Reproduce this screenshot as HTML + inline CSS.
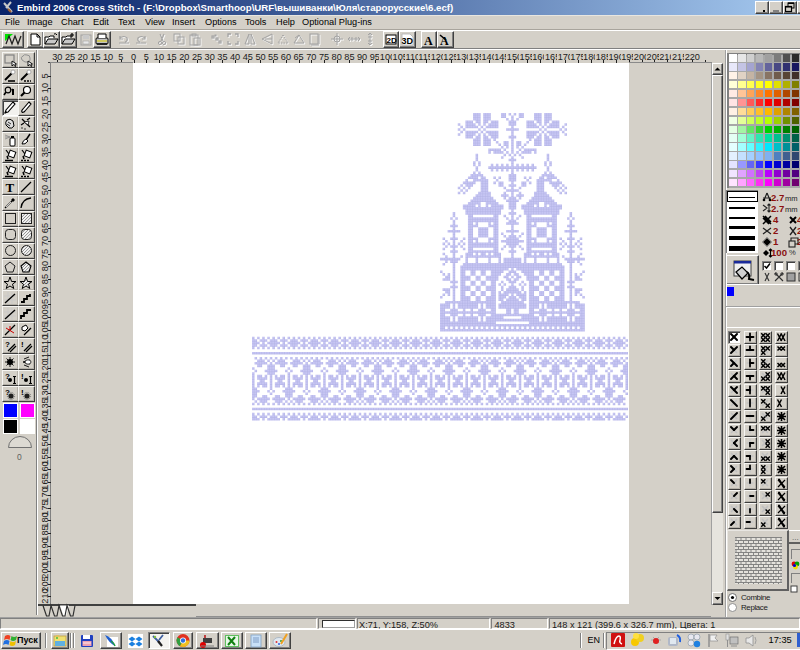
<!DOCTYPE html><html><head><meta charset="utf-8"><style>
html,body{margin:0;padding:0;}
body{width:800px;height:650px;overflow:hidden;position:relative;background:#d4d0c8;font-family:"Liberation Sans",sans-serif;}
div{box-sizing:border-box;}
.r{position:absolute;border-top:1px solid #fff;border-left:1px solid #fff;border-right:1px solid #404040;border-bottom:1px solid #404040;box-shadow:inset -1px -1px 0 #808080;background:#d4d0c8;}
.rb{position:absolute;border-top:1px solid #f6f5f2;border-left:1px solid #f6f5f2;border-right:1px solid #3c3c3c;border-bottom:1px solid #3c3c3c;box-shadow:inset -1px -1px 0 #b4b0a8;background:#d4d0c8;}
.s{position:absolute;border-top:1px solid #808080;border-left:1px solid #808080;border-right:1px solid #fff;border-bottom:1px solid #fff;}
.t{position:absolute;white-space:nowrap;line-height:1;}
svg{position:absolute;overflow:visible;}
</style></head><body>

<div style="position:absolute;left:0;top:0;width:800px;height:15px;background:linear-gradient(90deg,#0a246a 0%,#0a246a 5%,#a6caf0 100%);"></div>
<div class="t" style="left:17px;top:2.6px;font-size:9.7px;color:#fff;font-weight:bold;">Embird 2006 Cross Stitch - (F:\Dropbox\Smarthoop\URF\вышиванки\Юля\старорусские\6.ecf)</div>
<svg style="left:2px;top:1px;" width="14" height="13" viewBox="0 0 14 13"><path d="M2 2 L10 11 M9 1 L4 7" stroke="#c8c8c8" stroke-width="2"/><path d="M6 8 L9 11" stroke="#a06030" stroke-width="2"/></svg>
<div class="r" style="left:755px;top:1px;width:14px;height:13px;"></div>
<div class="r" style="left:769px;top:1px;width:14px;height:13px;"></div>
<div class="r" style="left:783px;top:1px;width:14px;height:13px;"></div>
<div class="r" style="left:797px;top:1px;width:14px;height:13px;"></div>
<svg style="left:755px;top:1px;" width="14" height="13" viewBox="0 0 14 13"><rect x="8" y="9" width="2" height="2" fill="#000"/></svg>
<svg style="left:769px;top:1px;" width="14" height="13" viewBox="0 0 14 13"><rect x="4" y="9" width="6" height="2" fill="#808080"/></svg>
<svg style="left:783px;top:1px;" width="14" height="13" viewBox="0 0 14 13"><rect x="5" y="2" width="6" height="5" fill="none" stroke="#000" stroke-width="1"/><rect x="2.5" y="5.5" width="6" height="5" fill="#d4d0c8" stroke="#000" stroke-width="1.2"/><rect x="2.5" y="5" width="6" height="1.5" fill="#000"/><rect x="5" y="1.5" width="6" height="1.5" fill="#000"/></svg>
<div class="t" style="left:5px;top:18px;font-size:9.2px;color:#000;font-weight:normal;">File</div>
<div class="t" style="left:27px;top:18px;font-size:9.2px;color:#000;font-weight:normal;">Image</div>
<div class="t" style="left:61px;top:18px;font-size:9.2px;color:#000;font-weight:normal;">Chart</div>
<div class="t" style="left:93px;top:18px;font-size:9.2px;color:#000;font-weight:normal;">Edit</div>
<div class="t" style="left:118px;top:18px;font-size:9.2px;color:#000;font-weight:normal;">Text</div>
<div class="t" style="left:145px;top:18px;font-size:9.2px;color:#000;font-weight:normal;">View</div>
<div class="t" style="left:172px;top:18px;font-size:9.2px;color:#000;font-weight:normal;">Insert</div>
<div class="t" style="left:205px;top:18px;font-size:9.2px;color:#000;font-weight:normal;">Options</div>
<div class="t" style="left:245px;top:18px;font-size:9.2px;color:#000;font-weight:normal;">Tools</div>
<div class="t" style="left:276px;top:18px;font-size:9.2px;color:#000;font-weight:normal;">Help</div>
<div class="t" style="left:302px;top:18px;font-size:9.2px;color:#000;font-weight:normal;">Optional Plug-ins</div>
<div style="position:absolute;left:0px;top:15px;width:800px;height:1px;background:#e8e6e0"></div>
<div style="position:absolute;left:0px;top:29px;width:800px;height:1px;background:#a8a49c"></div>
<div style="position:absolute;left:0px;top:30px;width:800px;height:1px;background:#fff"></div>
<div style="position:absolute;left:0px;top:48px;width:800px;height:1px;background:#808080"></div>
<div style="position:absolute;left:0px;top:49px;width:800px;height:1px;background:#fff"></div>
<div class="r" style="left:2px;top:31px;width:22px;height:17px;"></div>
<div class="r" style="left:27px;top:31px;width:17px;height:17px;"></div>
<div class="r" style="left:43px;top:31px;width:17px;height:17px;"></div>
<div class="r" style="left:60px;top:31px;width:17px;height:17px;"></div>
<div class="r" style="left:93px;top:31px;width:18px;height:17px;"></div>
<div class="r" style="left:383px;top:31px;width:16px;height:17px;"></div>
<div class="r" style="left:399px;top:31px;width:17px;height:17px;"></div>
<div class="r" style="left:421px;top:31px;width:16px;height:17px;"></div>
<div class="r" style="left:437px;top:31px;width:17px;height:17px;"></div>
<svg style="left:2px;top:31px;" width="22" height="17" viewBox="0 0 22 17"><path d="M3 3H11L3 10Z" fill="#00e000"/><path d="M4 13L7 5L10 13L13 5L16 13L19 5" fill="none" stroke="#202020" stroke-width="1.3"/></svg>
<svg style="left:27px;top:31px;" width="17" height="17" viewBox="0 0 17 17"><path d="M4 3H10L13 6V14H4Z" fill="#fff" stroke="#000" stroke-width="1"/><path d="M10 3V6H13" fill="none" stroke="#000" stroke-width="1"/></svg>
<svg style="left:43px;top:31px;" width="17" height="17" viewBox="0 0 17 17"><path d="M2 13V6H6L7 5H11V7" fill="#fff" stroke="#000" stroke-width="1"/><path d="M2 13L5 8H15L12 13Z" fill="#c8c8c8" stroke="#000" stroke-width="1"/><path d="M11 3Q13 2 14 4" stroke="#000" fill="none"/></svg>
<svg style="left:60px;top:31px;" width="17" height="17" viewBox="0 0 17 17"><path d="M2 13V6H6L7 5H11V7" fill="#fff" stroke="#000" stroke-width="1"/><path d="M2 13L5 8H15L12 13Z" fill="#c8c8c8" stroke="#000" stroke-width="1"/><path d="M12 2V6M10 4H14" stroke="#000" stroke-width="1.2"/></svg>
<svg style="left:79px;top:31px;" width="13" height="17" viewBox="0 0 13 17"><rect x="2" y="4" width="10" height="10" fill="none" stroke="#a0a0a0" stroke-width="1"/><rect x="4" y="4" width="6" height="4" fill="#c8c8c8"/><rect x="4" y="10" width="6" height="3" fill="#e8e8e8" stroke="#a0a0a0" stroke-width="0.6"/></svg>
<svg style="left:93px;top:31px;" width="18" height="17" viewBox="0 0 18 17"><rect x="3" y="7" width="12" height="6" rx="1" fill="#c0c0c0" stroke="#000" stroke-width="1"/><path d="M5 7V3H13V7" fill="#fff" stroke="#000" stroke-width="1"/><path d="M4 10H14" stroke="#e0d000" stroke-width="1"/><rect x="4" y="12" width="10" height="2" fill="#202020"/></svg>
<svg style="left:117px;top:32px;" width="14" height="14" viewBox="0 0 14 14"><g transform="translate(1,1)" stroke="#f8f8f8" fill="none"><path d="M3 6Q7 3 10 6Q11 9 8 10M2 11H12" stroke-width="1.2"/><path d="M3 4V7H6" stroke-width="1.2"/></g><g stroke="#a4a4a4" fill="none"><path d="M3 6Q7 3 10 6Q11 9 8 10M2 11H12" stroke-width="1.2"/><path d="M3 4V7H6" stroke-width="1.2"/></g></svg>
<svg style="left:134px;top:32px;" width="14" height="14" viewBox="0 0 14 14"><g transform="translate(1,1)" stroke="#f8f8f8" fill="none"><path d="M11 6Q7 3 4 6Q3 9 6 10M2 11H12" stroke-width="1.2"/><path d="M11 4V7H8" stroke-width="1.2"/></g><g stroke="#a4a4a4" fill="none"><path d="M11 6Q7 3 4 6Q3 9 6 10M2 11H12" stroke-width="1.2"/><path d="M11 4V7H8" stroke-width="1.2"/></g></svg>
<svg style="left:155px;top:32px;" width="14" height="14" viewBox="0 0 14 14"><g transform="translate(1,1)" stroke="#f8f8f8" fill="none"><path d="M5 2L8 9M9 2L6 9" stroke-width="1.1"/><circle cx="5" cy="11" r="1.6" stroke-width="1"/><circle cx="9" cy="11" r="1.6" stroke-width="1"/></g><g stroke="#a4a4a4" fill="none"><path d="M5 2L8 9M9 2L6 9" stroke-width="1.1"/><circle cx="5" cy="11" r="1.6" stroke-width="1"/><circle cx="9" cy="11" r="1.6" stroke-width="1"/></g></svg>
<svg style="left:172px;top:32px;" width="14" height="14" viewBox="0 0 14 14"><g transform="translate(1,1)" stroke="#f8f8f8" fill="none"><rect x="2" y="2" width="6" height="7" stroke-width="1"/><rect x="6" y="5" width="6" height="7" stroke-width="1"/></g><g stroke="#a4a4a4" fill="none"><rect x="2" y="2" width="6" height="7" stroke-width="1"/><rect x="6" y="5" width="6" height="7" stroke-width="1"/></g></svg>
<svg style="left:188px;top:32px;" width="14" height="14" viewBox="0 0 14 14"><g transform="translate(1,1)" stroke="#f8f8f8" fill="none"><rect x="2" y="3" width="8" height="10" stroke-width="1"/><rect x="6" y="6" width="6" height="7" stroke-width="1"/><rect x="4" y="2" width="4" height="2" stroke-width="1"/></g><g stroke="#a4a4a4" fill="none"><rect x="2" y="3" width="8" height="10" stroke-width="1"/><rect x="6" y="6" width="6" height="7" stroke-width="1"/><rect x="4" y="2" width="4" height="2" stroke-width="1"/></g></svg>
<svg style="left:209px;top:32px;" width="14" height="14" viewBox="0 0 14 14"><g transform="translate(1,1)" stroke="#f8f8f8" fill="none"><rect x="3" y="4" width="2" height="2" stroke-width="1.2"/><rect x="7" y="6" width="2" height="2" stroke-width="1.2"/><rect x="10" y="9" width="2" height="2" stroke-width="1.2"/><rect x="6" y="3" width="1" height="1"/></g><g stroke="#a4a4a4" fill="none"><rect x="3" y="4" width="2" height="2" stroke-width="1.2"/><rect x="7" y="6" width="2" height="2" stroke-width="1.2"/><rect x="10" y="9" width="2" height="2" stroke-width="1.2"/><rect x="6" y="3" width="1" height="1"/></g></svg>
<svg style="left:226px;top:32px;" width="14" height="14" viewBox="0 0 14 14"><g transform="translate(1,1)" stroke="#f8f8f8" fill="none"><path d="M2 5V2H5M9 2H12V5M12 9V12H9M5 12H2V9" stroke-width="1.3"/></g><g stroke="#a4a4a4" fill="none"><path d="M2 5V2H5M9 2H12V5M12 9V12H9M5 12H2V9" stroke-width="1.3"/></g></svg>
<svg style="left:243px;top:32px;" width="14" height="14" viewBox="0 0 14 14"><g transform="translate(1,1)" stroke="#f8f8f8" fill="none"><path d="M6 2V12H2ZM8 2V12H12Z" stroke-width="1"/></g><g stroke="#a4a4a4" fill="none"><path d="M6 2V12H2ZM8 2V12H12Z" stroke-width="1"/></g></svg>
<svg style="left:260px;top:32px;" width="14" height="14" viewBox="0 0 14 14"><g transform="translate(1,1)" stroke="#f8f8f8" fill="none"><path d="M12 2L2 7L12 12ZM12 7H5" stroke-width="1"/></g><g stroke="#a4a4a4" fill="none"><path d="M12 2L2 7L12 12ZM12 7H5" stroke-width="1"/></g></svg>
<svg style="left:276px;top:32px;" width="14" height="14" viewBox="0 0 14 14"><g transform="translate(1,1)" stroke="#f8f8f8" fill="none"><path d="M7 3L12 11H2Z" stroke-width="1" stroke-dasharray="1.5 1"/></g><g stroke="#a4a4a4" fill="none"><path d="M7 3L12 11H2Z" stroke-width="1" stroke-dasharray="1.5 1"/></g></svg>
<svg style="left:292px;top:32px;" width="14" height="14" viewBox="0 0 14 14"><g transform="translate(1,1)" stroke="#f8f8f8" fill="none"><path d="M7 3L12 11H2ZM3 6L7 3" stroke-width="1"/></g><g stroke="#a4a4a4" fill="none"><path d="M7 3L12 11H2ZM3 6L7 3" stroke-width="1"/></g></svg>
<svg style="left:308px;top:32px;" width="14" height="14" viewBox="0 0 14 14"><g transform="translate(1,1)" stroke="#f8f8f8" fill="none"><rect x="2" y="2" width="8" height="10" stroke-width="1.1"/><path d="M11 2V12M3 13H11" stroke-width="1"/></g><g stroke="#a4a4a4" fill="none"><rect x="2" y="2" width="8" height="10" stroke-width="1.1"/><path d="M11 2V12M3 13H11" stroke-width="1"/></g></svg>
<svg style="left:330px;top:32px;" width="14" height="14" viewBox="0 0 14 14"><g transform="translate(1,1)" stroke="#f8f8f8" fill="none"><path d="M7 1V13M1 7H13" stroke-width="1"/><circle cx="7" cy="7" r="3" stroke-width="1"/></g><g stroke="#a4a4a4" fill="none"><path d="M7 1V13M1 7H13" stroke-width="1"/><circle cx="7" cy="7" r="3" stroke-width="1"/></g></svg>
<svg style="left:347px;top:32px;" width="14" height="14" viewBox="0 0 14 14"><g transform="translate(1,1)" stroke="#f8f8f8" fill="none"><path d="M1 7H13M3 5L1 7L3 9M11 5L13 7L11 9M5 5V9M9 5V9" stroke-width="1"/></g><g stroke="#a4a4a4" fill="none"><path d="M1 7H13M3 5L1 7L3 9M11 5L13 7L11 9M5 5V9M9 5V9" stroke-width="1"/></g></svg>
<svg style="left:363px;top:32px;" width="14" height="14" viewBox="0 0 14 14"><g transform="translate(1,1)" stroke="#f8f8f8" fill="none"><path d="M7 1V13M5 3L7 1L9 3M5 11L7 13L9 11M5 5H9M5 9H9" stroke-width="1"/></g><g stroke="#a4a4a4" fill="none"><path d="M7 1V13M5 3L7 1L9 3M5 11L7 13L9 11M5 5H9M5 9H9" stroke-width="1"/></g></svg>
<svg style="left:383px;top:31px;" width="16" height="17" viewBox="0 0 16 17"><rect x="3" y="4" width="10" height="9" fill="#fff" stroke="#000" stroke-width="1"/><text x="3.5" y="12" font-family="Liberation Sans" font-weight="bold" font-size="8" fill="#000">2D</text></svg>
<div class="r" style="left:399px;top:31px;width:17px;height:17px;"></div>
<svg style="left:399px;top:31px;" width="17" height="17" viewBox="0 0 17 17"><path d="M3 3H11L14 6V14H3Z" fill="#fff" stroke="#b0b0b0" stroke-width="0.8"/><text x="2.5" y="13" font-family="Liberation Sans" font-weight="bold" font-size="9" fill="#000">3D</text></svg>
<svg style="left:421px;top:31px;" width="16" height="17" viewBox="0 0 16 17"><text x="3" y="13.5" font-family="Liberation Serif" font-weight="bold" font-size="12" fill="#000">A</text></svg>
<svg style="left:437px;top:31px;" width="17" height="17" viewBox="0 0 17 17"><text x="3" y="13.5" font-family="Liberation Serif" font-weight="bold" font-size="12" fill="#000">A</text><path d="M3 4L9 9" stroke="#000" stroke-width="1.6"/></svg>
<div style="position:absolute;left:0px;top:50px;width:37px;height:565px;background:#d4d0c8"></div>
<div style="position:absolute;left:36px;top:50px;width:1px;height:565px;background:#808080"></div>
<div style="position:absolute;left:37px;top:50px;width:1px;height:565px;background:#fff"></div>
<svg style="left:0;top:0" width="0" height="0"><defs><pattern id="ht" patternUnits="userSpaceOnUse" width="2.2" height="2.2" patternTransform="rotate(45)"><rect width="2.2" height="2.2" fill="#f4f4f4"/><path d="M0 0V2.2" stroke="#606060" stroke-width="1"/></pattern></defs></svg>
<div class="rb" style="left:2px;top:52px;width:17px;height:16px"></div>
<svg style="left:2px;top:52px;" width="17" height="16" viewBox="0 0 17 16"><rect x="3" y="3" width="9" height="8" fill="none" stroke="#808080" stroke-width="1.2"/><path d="M10 9L10 14L11.5 12.5L13 14.5L14 14L12.8 12L14.5 12Z" fill="#fff" stroke="#000" stroke-width="0.9"/></svg>
<div class="rb" style="left:18px;top:52px;width:17px;height:16px"></div>
<svg style="left:18px;top:52px;" width="17" height="16" viewBox="0 0 17 16"><path d="M4 8Q2 5 5 4Q6 2 9 3Q12 3 12 6Q13 9 10 10Q7 11 4 8Z" fill="none" stroke="#909090" stroke-width="1"/><path d="M10 9L10 14L11.5 12.5L13 14.5L14 14L12.8 12L14.5 12Z" fill="#fff" stroke="#000" stroke-width="0.9"/></svg>
<div class="rb" style="left:2px;top:68px;width:17px;height:16px"></div>
<svg style="left:2px;top:68px;" width="17" height="16" viewBox="0 0 17 16"><path d="M3 12L10 5" stroke="#000" stroke-width="2"/><circle cx="11" cy="4" r="2" fill="#fff" stroke="#999" stroke-width="0.8"/><path d="M6 13H13" stroke="#000" stroke-width="1.6"/></svg>
<div class="rb" style="left:18px;top:68px;width:17px;height:16px"></div>
<svg style="left:18px;top:68px;" width="17" height="16" viewBox="0 0 17 16"><path d="M3 12L10 5" stroke="#000" stroke-width="2"/><circle cx="11" cy="4" r="2" fill="#fff" stroke="#999" stroke-width="0.8"/><path d="M6 13H13" stroke="#000" stroke-width="1.6" stroke-dasharray="2 1"/></svg>
<div class="rb" style="left:2px;top:84px;width:17px;height:16px"></div>
<svg style="left:2px;top:84px;" width="17" height="16" viewBox="0 0 17 16"><circle cx="6" cy="6" r="2.8" fill="none" stroke="#000" stroke-width="1.2"/><path d="M4 8L2 11" stroke="#000" stroke-width="1.6"/><path d="M11 5V11" stroke="#000" stroke-width="2"/><path d="M9.5 6L11 5" stroke="#000" stroke-width="1.2"/></svg>
<div class="rb" style="left:18px;top:84px;width:17px;height:16px"></div>
<svg style="left:18px;top:84px;" width="17" height="16" viewBox="0 0 17 16"><circle cx="9" cy="6" r="3.5" fill="#fff" stroke="#000" stroke-width="1.2"/><path d="M6.5 8.5L3 12" stroke="#000" stroke-width="2.2"/></svg>
<div class="s" style="left:2px;top:100px;width:17px;height:16px;background:#f2f1ee;border-right-color:#fff;border-bottom-color:#fff;box-shadow:inset 1px 1px 0 #404040"></div>
<svg style="left:2px;top:100px;" width="17" height="16" viewBox="0 0 17 16"><path d="M11 2L13 4L6 12L3 13L4 10Z" fill="#fff" stroke="#000" stroke-width="1.1"/><path d="M3 13L4.5 11.5" stroke="#000" stroke-width="1.5"/></svg>
<div class="rb" style="left:18px;top:100px;width:17px;height:16px"></div>
<svg style="left:18px;top:100px;" width="17" height="16" viewBox="0 0 17 16"><path d="M11 2L13 4L7 11Q5 13 4 12Q3 11 5 9Z" fill="#fff" stroke="#000" stroke-width="1.1"/></svg>
<div class="rb" style="left:2px;top:116px;width:17px;height:16px"></div>
<svg style="left:2px;top:116px;" width="17" height="16" viewBox="0 0 17 16"><path d="M5 4Q8 2 11 5L12 10Q10 13 7 12L4 9Q3 6 5 4Z" fill="#e0e0e0" stroke="#000" stroke-width="1"/><path d="M6 6L9 8M5 8L8 10" stroke="#000" stroke-width="0.8"/></svg>
<div class="rb" style="left:18px;top:116px;width:17px;height:16px"></div>
<svg style="left:18px;top:116px;" width="17" height="16" viewBox="0 0 17 16"><path d="M4 3L12 11M9 4L12 2M3 9L6 7" stroke="#000" stroke-width="1.3"/><path d="M6 6L11 5L10 9Z" fill="#fff" stroke="#000" stroke-width="0.8"/><circle cx="4" cy="12" r="0.7" fill="#000"/><circle cx="7" cy="13" r="0.7" fill="#000"/></svg>
<div class="rb" style="left:2px;top:132px;width:17px;height:16px"></div>
<svg style="left:2px;top:132px;" width="17" height="16" viewBox="0 0 17 16"><rect x="8" y="6" width="5" height="8" rx="1" fill="#fff" stroke="#000" stroke-width="1"/><path d="M9 4H12V6H9Z" fill="#000"/><path d="M3 3L8 5M3 5L8 5M3 7L8 5" stroke="#888" stroke-width="0.8"/></svg>
<div class="rb" style="left:18px;top:132px;width:17px;height:16px"></div>
<svg style="left:18px;top:132px;" width="17" height="16" viewBox="0 0 17 16"><path d="M12 2L8 8" stroke="#000" stroke-width="1.5"/><path d="M8 7Q5 8 4 12Q7 13 10 9Z" fill="#fff" stroke="#000" stroke-width="1"/></svg>
<div class="rb" style="left:2px;top:147px;width:17px;height:16px"></div>
<svg style="left:2px;top:147px;" width="17" height="16" viewBox="0 0 17 16"><path d="M4 3L7 7" stroke="#000" stroke-width="1.2"/><rect x="7" y="4" width="6" height="6" transform="rotate(20 10 7)" fill="#fff" stroke="#000" stroke-width="1"/><path d="M5 9L6 12" stroke="#000" stroke-width="1.5"/><path d="M3 13.5H11" stroke="#000" stroke-width="1.5"/></svg>
<div class="rb" style="left:18px;top:147px;width:17px;height:16px"></div>
<svg style="left:18px;top:147px;" width="17" height="16" viewBox="0 0 17 16"><path d="M4 3L7 7" stroke="#000" stroke-width="1.2"/><rect x="7" y="4" width="6" height="6" transform="rotate(20 10 7)" fill="#fff" stroke="#000" stroke-width="1"/><path d="M5 9L6 12" stroke="#000" stroke-width="1.5"/><path d="M3 13.5H12" stroke="#000" stroke-width="1.5" stroke-dasharray="2 1"/></svg>
<div class="rb" style="left:2px;top:163px;width:17px;height:16px"></div>
<svg style="left:2px;top:163px;" width="17" height="16" viewBox="0 0 17 16"><path d="M4 3L7 7" stroke="#000" stroke-width="1.2"/><rect x="7" y="4" width="6" height="6" transform="rotate(20 10 7)" fill="#fff" stroke="#000" stroke-width="1"/><path d="M5 9L6 12" stroke="#000" stroke-width="1.5"/><path d="M3 13.5H11" stroke="#000" stroke-width="1.5"/></svg>
<div class="rb" style="left:18px;top:163px;width:17px;height:16px"></div>
<svg style="left:18px;top:163px;" width="17" height="16" viewBox="0 0 17 16"><path d="M4 3L7 7" stroke="#000" stroke-width="1.2"/><rect x="7" y="4" width="6" height="6" transform="rotate(20 10 7)" fill="#fff" stroke="#000" stroke-width="1"/><path d="M5 9L6 12" stroke="#000" stroke-width="1.5"/><path d="M3 13.5H12" stroke="#000" stroke-width="1.5" stroke-dasharray="2 1"/></svg>
<div class="rb" style="left:2px;top:179px;width:17px;height:16px"></div>
<svg style="left:2px;top:179px;" width="17" height="16" viewBox="0 0 17 16"><text x="3.5" y="13" font-family="Liberation Serif" font-weight="bold" font-size="13" fill="#000">T</text></svg>
<div class="rb" style="left:18px;top:179px;width:17px;height:16px"></div>
<svg style="left:18px;top:179px;" width="17" height="16" viewBox="0 0 17 16"><path d="M3 13L13 3" stroke="#000" stroke-width="1.3"/></svg>
<div class="rb" style="left:2px;top:195px;width:17px;height:16px"></div>
<svg style="left:2px;top:195px;" width="17" height="16" viewBox="0 0 17 16"><path d="M3 13L10 6" stroke="#000" stroke-width="1.3"/><path d="M4 12L9 7" stroke="#fff" stroke-width="0.8"/><path d="M9 5L11 3L13 5L11 7Z" fill="#000"/></svg>
<div class="rb" style="left:18px;top:195px;width:17px;height:16px"></div>
<svg style="left:18px;top:195px;" width="17" height="16" viewBox="0 0 17 16"><path d="M3 13Q4 4 13 3" fill="none" stroke="#000" stroke-width="1.3"/></svg>
<div class="rb" style="left:2px;top:211px;width:17px;height:16px"></div>
<svg style="left:2px;top:211px;" width="17" height="16" viewBox="0 0 17 16"><rect x="3.5" y="2.5" width="10" height="10" fill="none" stroke="#202020" stroke-width="1"/></svg>
<div class="rb" style="left:18px;top:211px;width:17px;height:16px"></div>
<svg style="left:18px;top:211px;" width="17" height="16" viewBox="0 0 17 16"><rect x="3.5" y="2.5" width="10" height="10" fill="url(#ht)" stroke="#202020" stroke-width="1"/></svg>
<div class="rb" style="left:2px;top:227px;width:17px;height:16px"></div>
<svg style="left:2px;top:227px;" width="17" height="16" viewBox="0 0 17 16"><rect x="3.5" y="2.5" width="10" height="10" rx="3" fill="none" stroke="#202020" stroke-width="1"/></svg>
<div class="rb" style="left:18px;top:227px;width:17px;height:16px"></div>
<svg style="left:18px;top:227px;" width="17" height="16" viewBox="0 0 17 16"><rect x="3.5" y="2.5" width="10" height="10" rx="3" fill="url(#ht)" stroke="#202020" stroke-width="1"/></svg>
<div class="rb" style="left:2px;top:243px;width:17px;height:16px"></div>
<svg style="left:2px;top:243px;" width="17" height="16" viewBox="0 0 17 16"><circle cx="8.5" cy="7.5" r="5" fill="none" stroke="#202020" stroke-width="1"/></svg>
<div class="rb" style="left:18px;top:243px;width:17px;height:16px"></div>
<svg style="left:18px;top:243px;" width="17" height="16" viewBox="0 0 17 16"><circle cx="8.5" cy="7.5" r="5" fill="url(#ht)" stroke="#202020" stroke-width="1"/></svg>
<div class="rb" style="left:2px;top:259px;width:17px;height:16px"></div>
<svg style="left:2px;top:259px;" width="17" height="16" viewBox="0 0 17 16"><path d="M8 3L13 7L11 13H5L3 7Z" fill="none" stroke="#202020" stroke-width="1"/></svg>
<div class="rb" style="left:18px;top:259px;width:17px;height:16px"></div>
<svg style="left:18px;top:259px;" width="17" height="16" viewBox="0 0 17 16"><path d="M8 3L13 7L11 13H5L3 7Z" fill="url(#ht)" stroke="#000" stroke-width="1.1"/></svg>
<div class="rb" style="left:2px;top:275px;width:17px;height:16px"></div>
<svg style="left:2px;top:275px;" width="17" height="16" viewBox="0 0 17 16"><path d="M8 2L9.6 6.5H14L10.5 9.2L11.8 13.5L8 11L4.2 13.5L5.5 9.2L2 6.5H6.4Z" fill="none" stroke="#000" stroke-width="1"/></svg>
<div class="rb" style="left:18px;top:275px;width:17px;height:16px"></div>
<svg style="left:18px;top:275px;" width="17" height="16" viewBox="0 0 17 16"><path d="M8 2L9.6 6.5H14L10.5 9.2L11.8 13.5L8 11L4.2 13.5L5.5 9.2L2 6.5H6.4Z" fill="url(#ht)" stroke="#000" stroke-width="1"/></svg>
<div class="rb" style="left:2px;top:290px;width:17px;height:16px"></div>
<svg style="left:2px;top:290px;" width="17" height="16" viewBox="0 0 17 16"><path d="M2 6H14M2 10H14M6 2V14M10 2V14" stroke="#c8c8c8" stroke-width="0.8"/><path d="M3 13L13 4" stroke="#000" stroke-width="1.3"/></svg>
<div class="rb" style="left:18px;top:290px;width:17px;height:16px"></div>
<svg style="left:18px;top:290px;" width="17" height="16" viewBox="0 0 17 16"><path d="M3 12H6V9H9V6H12V4" fill="none" stroke="#000" stroke-width="1.8"/></svg>
<div class="rb" style="left:2px;top:306px;width:17px;height:16px"></div>
<svg style="left:2px;top:306px;" width="17" height="16" viewBox="0 0 17 16"><path d="M2 6H14M2 10H14M6 2V14M10 2V14" stroke="#c8c8c8" stroke-width="0.8"/><path d="M3 13L13 4" stroke="#000" stroke-width="1.3"/></svg>
<div class="rb" style="left:18px;top:306px;width:17px;height:16px"></div>
<svg style="left:18px;top:306px;" width="17" height="16" viewBox="0 0 17 16"><path d="M3 13V10H6V7H9V4H13" fill="none" stroke="#000" stroke-width="1.8"/></svg>
<div class="rb" style="left:2px;top:322px;width:17px;height:16px"></div>
<svg style="left:2px;top:322px;" width="17" height="16" viewBox="0 0 17 16"><path d="M3 13L13 3" stroke="#000" stroke-width="1.3"/><path d="M4 6L12 11M8 4L8 9" stroke="#d00000" stroke-width="1"/></svg>
<div class="rb" style="left:18px;top:322px;width:17px;height:16px"></div>
<svg style="left:18px;top:322px;" width="17" height="16" viewBox="0 0 17 16"><path d="M6 13L13 6" stroke="#000" stroke-width="1.3"/><path d="M4 5L8 3L10 6L7 9L4 8Z" fill="#fff" stroke="#000" stroke-width="1"/></svg>
<div class="rb" style="left:2px;top:338px;width:17px;height:16px"></div>
<svg style="left:2px;top:338px;" width="17" height="16" viewBox="0 0 17 16"><text x="3" y="9" font-family="Liberation Sans" font-weight="bold" font-size="8" fill="#000">?</text><path d="M6 13L13 6M8 14L14 8" stroke="#000" stroke-width="1.3"/></svg>
<div class="rb" style="left:18px;top:338px;width:17px;height:16px"></div>
<svg style="left:18px;top:338px;" width="17" height="16" viewBox="0 0 17 16"><text x="3" y="9" font-family="Liberation Sans" font-weight="bold" font-size="8" fill="#000">!</text><path d="M6 13L13 6M8 14L14 8" stroke="#000" stroke-width="1.3"/></svg>
<div class="rb" style="left:2px;top:354px;width:17px;height:16px"></div>
<svg style="left:2px;top:354px;" width="17" height="16" viewBox="0 0 17 16"><circle cx="8" cy="8" r="3" fill="#000"/><path d="M8 3V13M3 8H13M4.5 4.5L11.5 11.5M11.5 4.5L4.5 11.5" stroke="#000" stroke-width="0.9"/></svg>
<div class="rb" style="left:18px;top:354px;width:17px;height:16px"></div>
<svg style="left:18px;top:354px;" width="17" height="16" viewBox="0 0 17 16"><path d="M5 8L12 6M5 8L12 10M6 5L11 3M6 11L11 13" stroke="#000" stroke-width="0.9"/><ellipse cx="10" cy="8" rx="3" ry="2.2" fill="#fff" stroke="#000" stroke-width="0.8"/></svg>
<div class="rb" style="left:2px;top:370px;width:17px;height:16px"></div>
<svg style="left:2px;top:370px;" width="17" height="16" viewBox="0 0 17 16"><text x="3" y="9" font-family="Liberation Sans" font-weight="bold" font-size="8" fill="#000">?</text><circle cx="8" cy="10" r="2" fill="#000"/><path d="M12.5 6V14M11 6.5H14M11 13.5H14" stroke="#000" stroke-width="1.2"/></svg>
<div class="rb" style="left:18px;top:370px;width:17px;height:16px"></div>
<svg style="left:18px;top:370px;" width="17" height="16" viewBox="0 0 17 16"><text x="3" y="9" font-family="Liberation Sans" font-weight="bold" font-size="8" fill="#000">!</text><circle cx="8" cy="10" r="2" fill="#000"/><path d="M12.5 6V14M11 6.5H14M11 13.5H14" stroke="#000" stroke-width="1.2"/></svg>
<div class="rb" style="left:2px;top:386px;width:17px;height:16px"></div>
<svg style="left:2px;top:386px;" width="17" height="16" viewBox="0 0 17 16"><text x="3" y="9" font-family="Liberation Sans" font-weight="bold" font-size="8" fill="#000">?</text><circle cx="9" cy="10" r="2.6" fill="#000" opacity="0.85"/><circle cx="9" cy="10" r="3.6" fill="none" stroke="#555" stroke-width="0.8" stroke-dasharray="1 1"/></svg>
<div class="rb" style="left:18px;top:386px;width:17px;height:16px"></div>
<svg style="left:18px;top:386px;" width="17" height="16" viewBox="0 0 17 16"><text x="3" y="9" font-family="Liberation Sans" font-weight="bold" font-size="8" fill="#000">!</text><circle cx="9" cy="10" r="2.6" fill="#000" opacity="0.85"/><circle cx="9" cy="10" r="3.6" fill="none" stroke="#555" stroke-width="0.8" stroke-dasharray="1 1"/></svg>
<div style="position:absolute;left:3px;top:403px;width:15px;height:15px;background:#fff"></div>
<div style="position:absolute;left:4px;top:404px;width:13px;height:13px;background:#0000ff"></div>
<div style="position:absolute;left:20px;top:403px;width:15px;height:15px;background:#fff"></div>
<div style="position:absolute;left:21px;top:404px;width:13px;height:13px;background:#ff00ff"></div>
<div style="position:absolute;left:3px;top:419px;width:15px;height:15px;background:#fff"></div>
<div style="position:absolute;left:4px;top:420px;width:13px;height:13px;background:#000"></div>
<div style="position:absolute;left:20px;top:419px;width:15px;height:15px;background:#fff"></div>
<div style="position:absolute;left:21px;top:420px;width:13px;height:13px;background:#fff"></div>
<svg style="left:7px;top:435px;" width="26" height="14" viewBox="0 0 26 14"><path d="M1.5 12.5A11.5 11 0 0 1 24.5 12.5Z" fill="#dcd9d2" stroke="#707070" stroke-width="1"/></svg>
<div class="t" style="left:17px;top:452.5px;font-size:8.5px;color:#606060;font-weight:normal;">0</div>
<div style="position:absolute;left:38px;top:50px;width:674px;height:555px;background:#d4d0c8"></div>
<div style="position:absolute;left:38px;top:50px;width:686px;height:13px;background:#d4d0c8"></div>
<div style="position:absolute;left:133px;top:63px;width:496px;height:541px;background:#fff"></div>
<div style="position:absolute;left:48px;top:62px;width:3px;height:1px;background:#404040"></div>
<div style="position:absolute;left:50px;top:63px;width:1px;height:541px;background:#808080"></div>
<div class="t" style="left:37.3px;top:52.5px;width:40px;text-align:center;font-size:9.2px;color:#202020;letter-spacing:0px"><span style="background:#d4d0c8;padding:0 0.5px">30</span></div>
<div class="t" style="left:50.0px;top:52.5px;width:40px;text-align:center;font-size:9.2px;color:#202020;letter-spacing:0px"><span style="background:#d4d0c8;padding:0 0.5px">25</span></div>
<div class="t" style="left:62.7px;top:52.5px;width:40px;text-align:center;font-size:9.2px;color:#202020;letter-spacing:0px"><span style="background:#d4d0c8;padding:0 0.5px">20</span></div>
<div class="t" style="left:75.4px;top:52.5px;width:40px;text-align:center;font-size:9.2px;color:#202020;letter-spacing:0px"><span style="background:#d4d0c8;padding:0 0.5px">15</span></div>
<div class="t" style="left:88.1px;top:52.5px;width:40px;text-align:center;font-size:9.2px;color:#202020;letter-spacing:0px"><span style="background:#d4d0c8;padding:0 0.5px">10</span></div>
<div class="t" style="left:100.8px;top:52.5px;width:40px;text-align:center;font-size:9.2px;color:#202020;letter-spacing:0px"><span style="background:#d4d0c8;padding:0 0.5px">5</span></div>
<div class="t" style="left:113.5px;top:52.5px;width:40px;text-align:center;font-size:9.2px;color:#202020;letter-spacing:0px"><span style="background:#d4d0c8;padding:0 0.5px">0</span></div>
<div class="t" style="left:126.2px;top:52.5px;width:40px;text-align:center;font-size:9.2px;color:#202020;letter-spacing:0px"><span style="background:#d4d0c8;padding:0 0.5px">5</span></div>
<div class="t" style="left:138.9px;top:52.5px;width:40px;text-align:center;font-size:9.2px;color:#202020;letter-spacing:0px"><span style="background:#d4d0c8;padding:0 0.5px">10</span></div>
<div class="t" style="left:151.6px;top:52.5px;width:40px;text-align:center;font-size:9.2px;color:#202020;letter-spacing:0px"><span style="background:#d4d0c8;padding:0 0.5px">15</span></div>
<div class="t" style="left:164.3px;top:52.5px;width:40px;text-align:center;font-size:9.2px;color:#202020;letter-spacing:0px"><span style="background:#d4d0c8;padding:0 0.5px">20</span></div>
<div class="t" style="left:177.0px;top:52.5px;width:40px;text-align:center;font-size:9.2px;color:#202020;letter-spacing:0px"><span style="background:#d4d0c8;padding:0 0.5px">25</span></div>
<div class="t" style="left:189.7px;top:52.5px;width:40px;text-align:center;font-size:9.2px;color:#202020;letter-spacing:0px"><span style="background:#d4d0c8;padding:0 0.5px">30</span></div>
<div class="t" style="left:202.4px;top:52.5px;width:40px;text-align:center;font-size:9.2px;color:#202020;letter-spacing:0px"><span style="background:#d4d0c8;padding:0 0.5px">35</span></div>
<div class="t" style="left:215.1px;top:52.5px;width:40px;text-align:center;font-size:9.2px;color:#202020;letter-spacing:0px"><span style="background:#d4d0c8;padding:0 0.5px">40</span></div>
<div class="t" style="left:227.8px;top:52.5px;width:40px;text-align:center;font-size:9.2px;color:#202020;letter-spacing:0px"><span style="background:#d4d0c8;padding:0 0.5px">45</span></div>
<div class="t" style="left:240.5px;top:52.5px;width:40px;text-align:center;font-size:9.2px;color:#202020;letter-spacing:0px"><span style="background:#d4d0c8;padding:0 0.5px">50</span></div>
<div class="t" style="left:253.2px;top:52.5px;width:40px;text-align:center;font-size:9.2px;color:#202020;letter-spacing:0px"><span style="background:#d4d0c8;padding:0 0.5px">55</span></div>
<div class="t" style="left:265.9px;top:52.5px;width:40px;text-align:center;font-size:9.2px;color:#202020;letter-spacing:0px"><span style="background:#d4d0c8;padding:0 0.5px">60</span></div>
<div class="t" style="left:278.6px;top:52.5px;width:40px;text-align:center;font-size:9.2px;color:#202020;letter-spacing:0px"><span style="background:#d4d0c8;padding:0 0.5px">65</span></div>
<div class="t" style="left:291.3px;top:52.5px;width:40px;text-align:center;font-size:9.2px;color:#202020;letter-spacing:0px"><span style="background:#d4d0c8;padding:0 0.5px">70</span></div>
<div class="t" style="left:304.0px;top:52.5px;width:40px;text-align:center;font-size:9.2px;color:#202020;letter-spacing:0px"><span style="background:#d4d0c8;padding:0 0.5px">75</span></div>
<div class="t" style="left:316.7px;top:52.5px;width:40px;text-align:center;font-size:9.2px;color:#202020;letter-spacing:0px"><span style="background:#d4d0c8;padding:0 0.5px">80</span></div>
<div class="t" style="left:329.4px;top:52.5px;width:40px;text-align:center;font-size:9.2px;color:#202020;letter-spacing:0px"><span style="background:#d4d0c8;padding:0 0.5px">85</span></div>
<div class="t" style="left:342.1px;top:52.5px;width:40px;text-align:center;font-size:9.2px;color:#202020;letter-spacing:0px"><span style="background:#d4d0c8;padding:0 0.5px">90</span></div>
<div class="t" style="left:354.8px;top:52.5px;width:40px;text-align:center;font-size:9.2px;color:#202020;letter-spacing:0px"><span style="background:#d4d0c8;padding:0 0.5px">95</span></div>
<div class="t" style="left:367.5px;top:52.5px;width:40px;text-align:center;font-size:9.2px;color:#202020;letter-spacing:0px"><span style="background:#d4d0c8;padding:0 0.5px">100</span></div>
<div class="t" style="left:380.2px;top:52.5px;width:40px;text-align:center;font-size:9.2px;color:#202020;letter-spacing:0px"><span style="background:#d4d0c8;padding:0 0.5px">105</span></div>
<div class="t" style="left:392.9px;top:52.5px;width:40px;text-align:center;font-size:9.2px;color:#202020;letter-spacing:0px"><span style="background:#d4d0c8;padding:0 0.5px">110</span></div>
<div class="t" style="left:405.6px;top:52.5px;width:40px;text-align:center;font-size:9.2px;color:#202020;letter-spacing:0px"><span style="background:#d4d0c8;padding:0 0.5px">115</span></div>
<div class="t" style="left:418.3px;top:52.5px;width:40px;text-align:center;font-size:9.2px;color:#202020;letter-spacing:0px"><span style="background:#d4d0c8;padding:0 0.5px">120</span></div>
<div class="t" style="left:431.0px;top:52.5px;width:40px;text-align:center;font-size:9.2px;color:#202020;letter-spacing:0px"><span style="background:#d4d0c8;padding:0 0.5px">125</span></div>
<div class="t" style="left:443.7px;top:52.5px;width:40px;text-align:center;font-size:9.2px;color:#202020;letter-spacing:0px"><span style="background:#d4d0c8;padding:0 0.5px">130</span></div>
<div class="t" style="left:456.4px;top:52.5px;width:40px;text-align:center;font-size:9.2px;color:#202020;letter-spacing:0px"><span style="background:#d4d0c8;padding:0 0.5px">135</span></div>
<div class="t" style="left:469.1px;top:52.5px;width:40px;text-align:center;font-size:9.2px;color:#202020;letter-spacing:0px"><span style="background:#d4d0c8;padding:0 0.5px">140</span></div>
<div class="t" style="left:481.8px;top:52.5px;width:40px;text-align:center;font-size:9.2px;color:#202020;letter-spacing:0px"><span style="background:#d4d0c8;padding:0 0.5px">145</span></div>
<div class="t" style="left:494.5px;top:52.5px;width:40px;text-align:center;font-size:9.2px;color:#202020;letter-spacing:0px"><span style="background:#d4d0c8;padding:0 0.5px">150</span></div>
<div class="t" style="left:507.2px;top:52.5px;width:40px;text-align:center;font-size:9.2px;color:#202020;letter-spacing:0px"><span style="background:#d4d0c8;padding:0 0.5px">155</span></div>
<div class="t" style="left:519.9px;top:52.5px;width:40px;text-align:center;font-size:9.2px;color:#202020;letter-spacing:0px"><span style="background:#d4d0c8;padding:0 0.5px">160</span></div>
<div class="t" style="left:532.6px;top:52.5px;width:40px;text-align:center;font-size:9.2px;color:#202020;letter-spacing:0px"><span style="background:#d4d0c8;padding:0 0.5px">165</span></div>
<div class="t" style="left:545.3px;top:52.5px;width:40px;text-align:center;font-size:9.2px;color:#202020;letter-spacing:0px"><span style="background:#d4d0c8;padding:0 0.5px">170</span></div>
<div class="t" style="left:558.0px;top:52.5px;width:40px;text-align:center;font-size:9.2px;color:#202020;letter-spacing:0px"><span style="background:#d4d0c8;padding:0 0.5px">175</span></div>
<div class="t" style="left:570.7px;top:52.5px;width:40px;text-align:center;font-size:9.2px;color:#202020;letter-spacing:0px"><span style="background:#d4d0c8;padding:0 0.5px">180</span></div>
<div class="t" style="left:583.4px;top:52.5px;width:40px;text-align:center;font-size:9.2px;color:#202020;letter-spacing:0px"><span style="background:#d4d0c8;padding:0 0.5px">185</span></div>
<div class="t" style="left:596.1px;top:52.5px;width:40px;text-align:center;font-size:9.2px;color:#202020;letter-spacing:0px"><span style="background:#d4d0c8;padding:0 0.5px">190</span></div>
<div class="t" style="left:608.8px;top:52.5px;width:40px;text-align:center;font-size:9.2px;color:#202020;letter-spacing:0px"><span style="background:#d4d0c8;padding:0 0.5px">195</span></div>
<div class="t" style="left:621.5px;top:52.5px;width:40px;text-align:center;font-size:9.2px;color:#202020;letter-spacing:0px"><span style="background:#d4d0c8;padding:0 0.5px">200</span></div>
<div class="t" style="left:634.2px;top:52.5px;width:40px;text-align:center;font-size:9.2px;color:#202020;letter-spacing:0px"><span style="background:#d4d0c8;padding:0 0.5px">205</span></div>
<div class="t" style="left:646.9px;top:52.5px;width:40px;text-align:center;font-size:9.2px;color:#202020;letter-spacing:0px"><span style="background:#d4d0c8;padding:0 0.5px">210</span></div>
<div class="t" style="left:659.6px;top:52.5px;width:40px;text-align:center;font-size:9.2px;color:#202020;letter-spacing:0px"><span style="background:#d4d0c8;padding:0 0.5px">215</span></div>
<div class="t" style="left:672.3px;top:52.5px;width:40px;text-align:center;font-size:9.2px;color:#202020;letter-spacing:0px"><span style="background:#d4d0c8;padding:0 0.5px">220</span></div>
<div style="position:absolute;left:57px;top:59.5px;width:1px;height:3.5px;background:#202020"></div>
<div style="position:absolute;left:70px;top:59.5px;width:1px;height:3.5px;background:#202020"></div>
<div style="position:absolute;left:83px;top:59.5px;width:1px;height:3.5px;background:#202020"></div>
<div style="position:absolute;left:95px;top:59.5px;width:1px;height:3.5px;background:#202020"></div>
<div style="position:absolute;left:108px;top:59.5px;width:1px;height:3.5px;background:#202020"></div>
<div style="position:absolute;left:121px;top:59.5px;width:1px;height:3.5px;background:#202020"></div>
<div style="position:absolute;left:134px;top:59.5px;width:1px;height:3.5px;background:#202020"></div>
<div style="position:absolute;left:146px;top:59.5px;width:1px;height:3.5px;background:#202020"></div>
<div style="position:absolute;left:159px;top:59.5px;width:1px;height:3.5px;background:#202020"></div>
<div style="position:absolute;left:172px;top:59.5px;width:1px;height:3.5px;background:#202020"></div>
<div style="position:absolute;left:184px;top:59.5px;width:1px;height:3.5px;background:#202020"></div>
<div style="position:absolute;left:197px;top:59.5px;width:1px;height:3.5px;background:#202020"></div>
<div style="position:absolute;left:210px;top:59.5px;width:1px;height:3.5px;background:#202020"></div>
<div style="position:absolute;left:222px;top:59.5px;width:1px;height:3.5px;background:#202020"></div>
<div style="position:absolute;left:235px;top:59.5px;width:1px;height:3.5px;background:#202020"></div>
<div style="position:absolute;left:248px;top:59.5px;width:1px;height:3.5px;background:#202020"></div>
<div style="position:absolute;left:260px;top:59.5px;width:1px;height:3.5px;background:#202020"></div>
<div style="position:absolute;left:273px;top:59.5px;width:1px;height:3.5px;background:#202020"></div>
<div style="position:absolute;left:286px;top:59.5px;width:1px;height:3.5px;background:#202020"></div>
<div style="position:absolute;left:299px;top:59.5px;width:1px;height:3.5px;background:#202020"></div>
<div style="position:absolute;left:311px;top:59.5px;width:1px;height:3.5px;background:#202020"></div>
<div style="position:absolute;left:324px;top:59.5px;width:1px;height:3.5px;background:#202020"></div>
<div style="position:absolute;left:337px;top:59.5px;width:1px;height:3.5px;background:#202020"></div>
<div style="position:absolute;left:349px;top:59.5px;width:1px;height:3.5px;background:#202020"></div>
<div style="position:absolute;left:362px;top:59.5px;width:1px;height:3.5px;background:#202020"></div>
<div style="position:absolute;left:375px;top:59.5px;width:1px;height:3.5px;background:#202020"></div>
<div style="position:absolute;left:388px;top:59.5px;width:1px;height:3.5px;background:#202020"></div>
<div style="position:absolute;left:400px;top:59.5px;width:1px;height:3.5px;background:#202020"></div>
<div style="position:absolute;left:413px;top:59.5px;width:1px;height:3.5px;background:#202020"></div>
<div style="position:absolute;left:426px;top:59.5px;width:1px;height:3.5px;background:#202020"></div>
<div style="position:absolute;left:438px;top:59.5px;width:1px;height:3.5px;background:#202020"></div>
<div style="position:absolute;left:451px;top:59.5px;width:1px;height:3.5px;background:#202020"></div>
<div style="position:absolute;left:464px;top:59.5px;width:1px;height:3.5px;background:#202020"></div>
<div style="position:absolute;left:476px;top:59.5px;width:1px;height:3.5px;background:#202020"></div>
<div style="position:absolute;left:489px;top:59.5px;width:1px;height:3.5px;background:#202020"></div>
<div style="position:absolute;left:502px;top:59.5px;width:1px;height:3.5px;background:#202020"></div>
<div style="position:absolute;left:514px;top:59.5px;width:1px;height:3.5px;background:#202020"></div>
<div style="position:absolute;left:527px;top:59.5px;width:1px;height:3.5px;background:#202020"></div>
<div style="position:absolute;left:540px;top:59.5px;width:1px;height:3.5px;background:#202020"></div>
<div style="position:absolute;left:553px;top:59.5px;width:1px;height:3.5px;background:#202020"></div>
<div style="position:absolute;left:565px;top:59.5px;width:1px;height:3.5px;background:#202020"></div>
<div style="position:absolute;left:578px;top:59.5px;width:1px;height:3.5px;background:#202020"></div>
<div style="position:absolute;left:591px;top:59.5px;width:1px;height:3.5px;background:#202020"></div>
<div style="position:absolute;left:603px;top:59.5px;width:1px;height:3.5px;background:#202020"></div>
<div style="position:absolute;left:616px;top:59.5px;width:1px;height:3.5px;background:#202020"></div>
<div style="position:absolute;left:629px;top:59.5px;width:1px;height:3.5px;background:#202020"></div>
<div style="position:absolute;left:642px;top:59.5px;width:1px;height:3.5px;background:#202020"></div>
<div style="position:absolute;left:654px;top:59.5px;width:1px;height:3.5px;background:#202020"></div>
<div style="position:absolute;left:667px;top:59.5px;width:1px;height:3.5px;background:#202020"></div>
<div style="position:absolute;left:680px;top:59.5px;width:1px;height:3.5px;background:#202020"></div>
<div style="position:absolute;left:692px;top:59.5px;width:1px;height:3.5px;background:#202020"></div>
<div style="position:absolute;left:705px;top:59.5px;width:1px;height:3.5px;background:#202020"></div>
<div style="position:absolute;left:48px;top:76px;width:3px;height:1px;background:#202020"></div>
<div class="t" style="left:24.5px;top:70.7px;width:40px;height:10px;text-align:center;font-size:9.2px;color:#202020;letter-spacing:0px;transform:rotate(-90deg);transform-origin:20px 5px;line-height:10px">5</div>
<div style="position:absolute;left:48px;top:88px;width:3px;height:1px;background:#202020"></div>
<div class="t" style="left:24.5px;top:83.4px;width:40px;height:10px;text-align:center;font-size:9.2px;color:#202020;letter-spacing:0px;transform:rotate(-90deg);transform-origin:20px 5px;line-height:10px">10</div>
<div style="position:absolute;left:48px;top:101px;width:3px;height:1px;background:#202020"></div>
<div class="t" style="left:24.5px;top:96.1px;width:40px;height:10px;text-align:center;font-size:9.2px;color:#202020;letter-spacing:0px;transform:rotate(-90deg);transform-origin:20px 5px;line-height:10px">15</div>
<div style="position:absolute;left:48px;top:114px;width:3px;height:1px;background:#202020"></div>
<div class="t" style="left:24.5px;top:108.8px;width:40px;height:10px;text-align:center;font-size:9.2px;color:#202020;letter-spacing:0px;transform:rotate(-90deg);transform-origin:20px 5px;line-height:10px">20</div>
<div style="position:absolute;left:48px;top:126px;width:3px;height:1px;background:#202020"></div>
<div class="t" style="left:24.5px;top:121.5px;width:40px;height:10px;text-align:center;font-size:9.2px;color:#202020;letter-spacing:0px;transform:rotate(-90deg);transform-origin:20px 5px;line-height:10px">25</div>
<div style="position:absolute;left:48px;top:139px;width:3px;height:1px;background:#202020"></div>
<div class="t" style="left:24.5px;top:134.2px;width:40px;height:10px;text-align:center;font-size:9.2px;color:#202020;letter-spacing:0px;transform:rotate(-90deg);transform-origin:20px 5px;line-height:10px">30</div>
<div style="position:absolute;left:48px;top:152px;width:3px;height:1px;background:#202020"></div>
<div class="t" style="left:24.5px;top:146.9px;width:40px;height:10px;text-align:center;font-size:9.2px;color:#202020;letter-spacing:0px;transform:rotate(-90deg);transform-origin:20px 5px;line-height:10px">35</div>
<div style="position:absolute;left:48px;top:165px;width:3px;height:1px;background:#202020"></div>
<div class="t" style="left:24.5px;top:159.6px;width:40px;height:10px;text-align:center;font-size:9.2px;color:#202020;letter-spacing:0px;transform:rotate(-90deg);transform-origin:20px 5px;line-height:10px">40</div>
<div style="position:absolute;left:48px;top:177px;width:3px;height:1px;background:#202020"></div>
<div class="t" style="left:24.5px;top:172.3px;width:40px;height:10px;text-align:center;font-size:9.2px;color:#202020;letter-spacing:0px;transform:rotate(-90deg);transform-origin:20px 5px;line-height:10px">45</div>
<div style="position:absolute;left:48px;top:190px;width:3px;height:1px;background:#202020"></div>
<div class="t" style="left:24.5px;top:185.0px;width:40px;height:10px;text-align:center;font-size:9.2px;color:#202020;letter-spacing:0px;transform:rotate(-90deg);transform-origin:20px 5px;line-height:10px">50</div>
<div style="position:absolute;left:48px;top:203px;width:3px;height:1px;background:#202020"></div>
<div class="t" style="left:24.5px;top:197.7px;width:40px;height:10px;text-align:center;font-size:9.2px;color:#202020;letter-spacing:0px;transform:rotate(-90deg);transform-origin:20px 5px;line-height:10px">55</div>
<div style="position:absolute;left:48px;top:215px;width:3px;height:1px;background:#202020"></div>
<div class="t" style="left:24.5px;top:210.4px;width:40px;height:10px;text-align:center;font-size:9.2px;color:#202020;letter-spacing:0px;transform:rotate(-90deg);transform-origin:20px 5px;line-height:10px">60</div>
<div style="position:absolute;left:48px;top:228px;width:3px;height:1px;background:#202020"></div>
<div class="t" style="left:24.5px;top:223.1px;width:40px;height:10px;text-align:center;font-size:9.2px;color:#202020;letter-spacing:0px;transform:rotate(-90deg);transform-origin:20px 5px;line-height:10px">65</div>
<div style="position:absolute;left:48px;top:241px;width:3px;height:1px;background:#202020"></div>
<div class="t" style="left:24.5px;top:235.8px;width:40px;height:10px;text-align:center;font-size:9.2px;color:#202020;letter-spacing:0px;transform:rotate(-90deg);transform-origin:20px 5px;line-height:10px">70</div>
<div style="position:absolute;left:48px;top:254px;width:3px;height:1px;background:#202020"></div>
<div class="t" style="left:24.5px;top:248.5px;width:40px;height:10px;text-align:center;font-size:9.2px;color:#202020;letter-spacing:0px;transform:rotate(-90deg);transform-origin:20px 5px;line-height:10px">75</div>
<div style="position:absolute;left:48px;top:266px;width:3px;height:1px;background:#202020"></div>
<div class="t" style="left:24.5px;top:261.2px;width:40px;height:10px;text-align:center;font-size:9.2px;color:#202020;letter-spacing:0px;transform:rotate(-90deg);transform-origin:20px 5px;line-height:10px">80</div>
<div style="position:absolute;left:48px;top:279px;width:3px;height:1px;background:#202020"></div>
<div class="t" style="left:24.5px;top:273.9px;width:40px;height:10px;text-align:center;font-size:9.2px;color:#202020;letter-spacing:0px;transform:rotate(-90deg);transform-origin:20px 5px;line-height:10px">85</div>
<div style="position:absolute;left:48px;top:292px;width:3px;height:1px;background:#202020"></div>
<div class="t" style="left:24.5px;top:286.6px;width:40px;height:10px;text-align:center;font-size:9.2px;color:#202020;letter-spacing:0px;transform:rotate(-90deg);transform-origin:20px 5px;line-height:10px">90</div>
<div style="position:absolute;left:48px;top:304px;width:3px;height:1px;background:#202020"></div>
<div class="t" style="left:24.5px;top:299.3px;width:40px;height:10px;text-align:center;font-size:9.2px;color:#202020;letter-spacing:0px;transform:rotate(-90deg);transform-origin:20px 5px;line-height:10px">95</div>
<div style="position:absolute;left:48px;top:317px;width:3px;height:1px;background:#202020"></div>
<div class="t" style="left:24.5px;top:312.0px;width:40px;height:10px;text-align:center;font-size:9.2px;color:#202020;letter-spacing:0px;transform:rotate(-90deg);transform-origin:20px 5px;line-height:10px">100</div>
<div style="position:absolute;left:48px;top:330px;width:3px;height:1px;background:#202020"></div>
<div class="t" style="left:24.5px;top:324.7px;width:40px;height:10px;text-align:center;font-size:9.2px;color:#202020;letter-spacing:0px;transform:rotate(-90deg);transform-origin:20px 5px;line-height:10px">105</div>
<div style="position:absolute;left:48px;top:342px;width:3px;height:1px;background:#202020"></div>
<div class="t" style="left:24.5px;top:337.4px;width:40px;height:10px;text-align:center;font-size:9.2px;color:#202020;letter-spacing:0px;transform:rotate(-90deg);transform-origin:20px 5px;line-height:10px">110</div>
<div style="position:absolute;left:48px;top:355px;width:3px;height:1px;background:#202020"></div>
<div class="t" style="left:24.5px;top:350.1px;width:40px;height:10px;text-align:center;font-size:9.2px;color:#202020;letter-spacing:0px;transform:rotate(-90deg);transform-origin:20px 5px;line-height:10px">115</div>
<div style="position:absolute;left:48px;top:368px;width:3px;height:1px;background:#202020"></div>
<div class="t" style="left:24.5px;top:362.8px;width:40px;height:10px;text-align:center;font-size:9.2px;color:#202020;letter-spacing:0px;transform:rotate(-90deg);transform-origin:20px 5px;line-height:10px">120</div>
<div style="position:absolute;left:48px;top:380px;width:3px;height:1px;background:#202020"></div>
<div class="t" style="left:24.5px;top:375.5px;width:40px;height:10px;text-align:center;font-size:9.2px;color:#202020;letter-spacing:0px;transform:rotate(-90deg);transform-origin:20px 5px;line-height:10px">125</div>
<div style="position:absolute;left:48px;top:393px;width:3px;height:1px;background:#202020"></div>
<div class="t" style="left:24.5px;top:388.2px;width:40px;height:10px;text-align:center;font-size:9.2px;color:#202020;letter-spacing:0px;transform:rotate(-90deg);transform-origin:20px 5px;line-height:10px">130</div>
<div style="position:absolute;left:48px;top:406px;width:3px;height:1px;background:#202020"></div>
<div class="t" style="left:24.5px;top:400.9px;width:40px;height:10px;text-align:center;font-size:9.2px;color:#202020;letter-spacing:0px;transform:rotate(-90deg);transform-origin:20px 5px;line-height:10px">135</div>
<div style="position:absolute;left:48px;top:419px;width:3px;height:1px;background:#202020"></div>
<div class="t" style="left:24.5px;top:413.6px;width:40px;height:10px;text-align:center;font-size:9.2px;color:#202020;letter-spacing:0px;transform:rotate(-90deg);transform-origin:20px 5px;line-height:10px">140</div>
<div style="position:absolute;left:48px;top:431px;width:3px;height:1px;background:#202020"></div>
<div class="t" style="left:24.5px;top:426.3px;width:40px;height:10px;text-align:center;font-size:9.2px;color:#202020;letter-spacing:0px;transform:rotate(-90deg);transform-origin:20px 5px;line-height:10px">145</div>
<div style="position:absolute;left:48px;top:444px;width:3px;height:1px;background:#202020"></div>
<div class="t" style="left:24.5px;top:439.0px;width:40px;height:10px;text-align:center;font-size:9.2px;color:#202020;letter-spacing:0px;transform:rotate(-90deg);transform-origin:20px 5px;line-height:10px">150</div>
<div style="position:absolute;left:48px;top:457px;width:3px;height:1px;background:#202020"></div>
<div class="t" style="left:24.5px;top:451.7px;width:40px;height:10px;text-align:center;font-size:9.2px;color:#202020;letter-spacing:0px;transform:rotate(-90deg);transform-origin:20px 5px;line-height:10px">155</div>
<div style="position:absolute;left:48px;top:469px;width:3px;height:1px;background:#202020"></div>
<div class="t" style="left:24.5px;top:464.4px;width:40px;height:10px;text-align:center;font-size:9.2px;color:#202020;letter-spacing:0px;transform:rotate(-90deg);transform-origin:20px 5px;line-height:10px">160</div>
<div style="position:absolute;left:48px;top:482px;width:3px;height:1px;background:#202020"></div>
<div class="t" style="left:24.5px;top:477.1px;width:40px;height:10px;text-align:center;font-size:9.2px;color:#202020;letter-spacing:0px;transform:rotate(-90deg);transform-origin:20px 5px;line-height:10px">165</div>
<div style="position:absolute;left:48px;top:495px;width:3px;height:1px;background:#202020"></div>
<div class="t" style="left:24.5px;top:489.8px;width:40px;height:10px;text-align:center;font-size:9.2px;color:#202020;letter-spacing:0px;transform:rotate(-90deg);transform-origin:20px 5px;line-height:10px">170</div>
<div style="position:absolute;left:48px;top:508px;width:3px;height:1px;background:#202020"></div>
<div class="t" style="left:24.5px;top:502.5px;width:40px;height:10px;text-align:center;font-size:9.2px;color:#202020;letter-spacing:0px;transform:rotate(-90deg);transform-origin:20px 5px;line-height:10px">175</div>
<div style="position:absolute;left:48px;top:520px;width:3px;height:1px;background:#202020"></div>
<div class="t" style="left:24.5px;top:515.2px;width:40px;height:10px;text-align:center;font-size:9.2px;color:#202020;letter-spacing:0px;transform:rotate(-90deg);transform-origin:20px 5px;line-height:10px">180</div>
<div style="position:absolute;left:48px;top:533px;width:3px;height:1px;background:#202020"></div>
<div class="t" style="left:24.5px;top:527.9px;width:40px;height:10px;text-align:center;font-size:9.2px;color:#202020;letter-spacing:0px;transform:rotate(-90deg);transform-origin:20px 5px;line-height:10px">185</div>
<div style="position:absolute;left:48px;top:546px;width:3px;height:1px;background:#202020"></div>
<div class="t" style="left:24.5px;top:540.6px;width:40px;height:10px;text-align:center;font-size:9.2px;color:#202020;letter-spacing:0px;transform:rotate(-90deg);transform-origin:20px 5px;line-height:10px">190</div>
<div style="position:absolute;left:48px;top:558px;width:3px;height:1px;background:#202020"></div>
<div class="t" style="left:24.5px;top:553.3px;width:40px;height:10px;text-align:center;font-size:9.2px;color:#202020;letter-spacing:0px;transform:rotate(-90deg);transform-origin:20px 5px;line-height:10px">195</div>
<div style="position:absolute;left:48px;top:571px;width:3px;height:1px;background:#202020"></div>
<div class="t" style="left:24.5px;top:566.0px;width:40px;height:10px;text-align:center;font-size:9.2px;color:#202020;letter-spacing:0px;transform:rotate(-90deg);transform-origin:20px 5px;line-height:10px">200</div>
<div style="position:absolute;left:48px;top:584px;width:3px;height:1px;background:#202020"></div>
<div class="t" style="left:24.5px;top:578.7px;width:40px;height:10px;text-align:center;font-size:9.2px;color:#202020;letter-spacing:0px;transform:rotate(-90deg);transform-origin:20px 5px;line-height:10px">205</div>
<div style="position:absolute;left:48px;top:596px;width:3px;height:1px;background:#202020"></div>
<div class="t" style="left:24.5px;top:591.4px;width:40px;height:10px;text-align:center;font-size:9.2px;color:#202020;letter-spacing:0px;transform:rotate(-90deg);transform-origin:20px 5px;line-height:10px">210</div>
<div style="position:absolute;left:50px;top:62px;width:83px;height:1px;background:#8a8a8a"></div>
<div style="position:absolute;left:629px;top:62px;width:83px;height:1px;background:#8a8a8a"></div>
<svg style="left:252.25px;top:113px" width="376" height="308" viewBox="0 0 148 121.2" preserveAspectRatio="none"><defs><pattern id="g" patternUnits="userSpaceOnUse" width="1" height="1"><rect width="1" height="1" fill="#c6c5f3"/><path d="M0 0.9H1M0.9 0V1" stroke="#b0afe0" stroke-width="0.2"/></pattern></defs><path d="M87 0h3v1h-3zM91 0h3v1h-3zM98 0h2v1h-2zM101 0h1v1h-1zM103 0h1v1h-1zM105 0h2v1h-2zM111 0h3v1h-3zM115 0h3v1h-3zM87 1h3v1h-3zM91 1h3v1h-3zM98 1h2v1h-2zM102 1h1v1h-1zM105 1h2v1h-2zM111 1h3v1h-3zM115 1h3v1h-3zM87 2h3v1h-3zM91 2h3v1h-3zM100 2h1v1h-1zM102 2h1v1h-1zM104 2h1v1h-1zM111 2h3v1h-3zM115 2h3v1h-3zM84 3h3v1h-3zM88 3h2v1h-2zM91 3h2v1h-2zM94 3h3v1h-3zM101 3h3v1h-3zM108 3h3v1h-3zM112 3h2v1h-2zM115 3h2v1h-2zM118 3h3v1h-3zM81 4h1v1h-1zM84 4h4v1h-4zM89 4h1v1h-1zM91 4h1v1h-1zM93 4h4v1h-4zM101 4h3v1h-3zM108 4h4v1h-4zM113 4h1v1h-1zM115 4h1v1h-1zM117 4h4v1h-4zM123 4h1v1h-1zM82 5h1v1h-1zM84 5h5v1h-5zM90 5h1v1h-1zM92 5h5v1h-5zM102 5h1v1h-1zM108 5h5v1h-5zM114 5h1v1h-1zM116 5h5v1h-5zM122 5h1v1h-1zM81 6h1v1h-1zM83 6h1v1h-1zM89 6h1v1h-1zM91 6h1v1h-1zM100 6h5v1h-5zM113 6h1v1h-1zM115 6h1v1h-1zM121 6h1v1h-1zM123 6h1v1h-1zM82 7h1v1h-1zM84 7h5v1h-5zM90 7h1v1h-1zM92 7h5v1h-5zM102 7h1v1h-1zM108 7h5v1h-5zM114 7h1v1h-1zM116 7h5v1h-5zM122 7h1v1h-1zM81 8h1v1h-1zM84 8h4v1h-4zM89 8h1v1h-1zM91 8h1v1h-1zM93 8h4v1h-4zM102 8h1v1h-1zM108 8h4v1h-4zM113 8h1v1h-1zM115 8h1v1h-1zM117 8h4v1h-4zM123 8h1v1h-1zM84 9h3v1h-3zM88 9h2v1h-2zM91 9h2v1h-2zM94 9h3v1h-3zM101 9h3v1h-3zM108 9h3v1h-3zM112 9h2v1h-2zM115 9h2v1h-2zM118 9h3v1h-3zM87 10h3v1h-3zM91 10h3v1h-3zM95 10h1v1h-1zM102 10h1v1h-1zM109 10h1v1h-1zM111 10h3v1h-3zM115 10h3v1h-3zM87 11h3v1h-3zM91 11h3v1h-3zM96 11h1v1h-1zM99 11h2v1h-2zM102 11h1v1h-1zM104 11h2v1h-2zM108 11h1v1h-1zM111 11h3v1h-3zM115 11h3v1h-3zM87 12h3v1h-3zM91 12h3v1h-3zM97 12h1v1h-1zM99 12h2v1h-2zM102 12h1v1h-1zM104 12h2v1h-2zM107 12h1v1h-1zM111 12h3v1h-3zM115 12h3v1h-3zM98 13h1v1h-1zM100 13h1v1h-1zM102 13h1v1h-1zM104 13h1v1h-1zM106 13h1v1h-1zM93 14h5v1h-5zM99 14h1v1h-1zM102 14h1v1h-1zM105 14h1v1h-1zM107 14h5v1h-5zM93 15h1v1h-1zM95 15h4v1h-4zM100 15h1v1h-1zM102 15h1v1h-1zM104 15h1v1h-1zM106 15h4v1h-4zM111 15h1v1h-1zM88 16h1v1h-1zM99 16h1v1h-1zM101 16h1v1h-1zM103 16h1v1h-1zM105 16h1v1h-1zM116 16h1v1h-1zM88 17h1v1h-1zM98 17h1v1h-1zM102 17h1v1h-1zM106 17h1v1h-1zM116 17h1v1h-1zM88 18h1v1h-1zM101 18h3v1h-3zM116 18h1v1h-1zM87 19h1v1h-1zM89 19h1v1h-1zM102 19h1v1h-1zM115 19h1v1h-1zM117 19h1v1h-1zM87 20h1v1h-1zM89 20h1v1h-1zM94 20h1v1h-1zM96 20h1v1h-1zM98 20h1v1h-1zM100 20h1v1h-1zM102 20h1v1h-1zM104 20h1v1h-1zM106 20h1v1h-1zM108 20h1v1h-1zM110 20h1v1h-1zM115 20h1v1h-1zM117 20h1v1h-1zM88 21h1v1h-1zM93 21h19v1h-19zM116 21h1v1h-1zM88 22h1v1h-1zM94 22h1v1h-1zM96 22h1v1h-1zM98 22h1v1h-1zM100 22h1v1h-1zM102 22h1v1h-1zM104 22h1v1h-1zM106 22h1v1h-1zM108 22h1v1h-1zM110 22h1v1h-1zM116 22h1v1h-1zM87 23h1v1h-1zM89 23h1v1h-1zM102 23h1v1h-1zM115 23h1v1h-1zM117 23h1v1h-1zM86 24h5v1h-5zM101 24h3v1h-3zM114 24h5v1h-5zM85 25h4v1h-4zM90 25h2v1h-2zM95 25h1v1h-1zM97 25h1v1h-1zM101 25h3v1h-3zM107 25h1v1h-1zM109 25h1v1h-1zM113 25h2v1h-2zM116 25h4v1h-4zM84 26h1v1h-1zM87 26h6v1h-6zM96 26h1v1h-1zM101 26h3v1h-3zM108 26h1v1h-1zM112 26h6v1h-6zM120 26h1v1h-1zM83 27h5v1h-5zM90 27h3v1h-3zM95 27h1v1h-1zM97 27h2v1h-2zM102 27h1v1h-1zM106 27h2v1h-2zM109 27h1v1h-1zM112 27h3v1h-3zM117 27h5v1h-5zM82 28h1v1h-1zM84 28h3v1h-3zM90 28h3v1h-3zM97 28h2v1h-2zM101 28h3v1h-3zM106 28h2v1h-2zM112 28h3v1h-3zM118 28h3v1h-3zM122 28h1v1h-1zM81 29h1v1h-1zM83 29h1v1h-1zM85 29h1v1h-1zM90 29h3v1h-3zM99 29h1v1h-1zM102 29h1v1h-1zM105 29h1v1h-1zM112 29h3v1h-3zM119 29h1v1h-1zM121 29h1v1h-1zM123 29h1v1h-1zM82 30h1v1h-1zM84 30h1v1h-1zM90 30h3v1h-3zM100 30h5v1h-5zM112 30h3v1h-3zM120 30h1v1h-1zM122 30h1v1h-1zM81 31h1v1h-1zM83 31h1v1h-1zM89 31h5v1h-5zM99 31h1v1h-1zM102 31h1v1h-1zM105 31h1v1h-1zM111 31h5v1h-5zM121 31h1v1h-1zM123 31h1v1h-1zM88 32h6v1h-6zM98 32h3v1h-3zM102 32h1v1h-1zM104 32h3v1h-3zM111 32h6v1h-6zM87 33h8v1h-8zM99 33h1v1h-1zM101 33h3v1h-3zM105 33h1v1h-1zM110 33h8v1h-8zM86 34h10v1h-10zM100 34h5v1h-5zM109 34h10v1h-10zM85 35h5v1h-5zM92 35h5v1h-5zM101 35h3v1h-3zM108 35h5v1h-5zM115 35h5v1h-5zM83 36h5v1h-5zM89 36h1v1h-1zM92 36h1v1h-1zM94 36h5v1h-5zM101 36h3v1h-3zM106 36h5v1h-5zM112 36h1v1h-1zM115 36h1v1h-1zM117 36h5v1h-5zM83 37h16v1h-16zM101 37h3v1h-3zM106 37h16v1h-16zM84 38h14v1h-14zM102 38h1v1h-1zM107 38h14v1h-14zM79 39h1v1h-1zM84 39h14v1h-14zM101 39h3v1h-3zM107 39h14v1h-14zM125 39h1v1h-1zM79 40h1v1h-1zM85 40h2v1h-2zM95 40h2v1h-2zM99 40h1v1h-1zM102 40h1v1h-1zM105 40h1v1h-1zM108 40h2v1h-2zM118 40h2v1h-2zM125 40h1v1h-1zM78 41h1v1h-1zM80 41h1v1h-1zM85 41h12v1h-12zM100 41h1v1h-1zM102 41h1v1h-1zM104 41h1v1h-1zM108 41h12v1h-12zM124 41h1v1h-1zM126 41h1v1h-1zM79 42h1v1h-1zM85 42h12v1h-12zM101 42h3v1h-3zM108 42h12v1h-12zM125 42h1v1h-1zM79 43h1v1h-1zM85 43h2v1h-2zM88 43h1v1h-1zM93 43h1v1h-1zM95 43h2v1h-2zM100 43h5v1h-5zM108 43h2v1h-2zM111 43h1v1h-1zM116 43h1v1h-1zM118 43h2v1h-2zM125 43h1v1h-1zM78 44h3v1h-3zM85 44h4v1h-4zM93 44h4v1h-4zM102 44h1v1h-1zM108 44h4v1h-4zM116 44h4v1h-4zM124 44h3v1h-3zM79 45h1v1h-1zM85 45h2v1h-2zM89 45h4v1h-4zM95 45h2v1h-2zM102 45h1v1h-1zM108 45h2v1h-2zM112 45h4v1h-4zM118 45h2v1h-2zM125 45h1v1h-1zM77 46h5v1h-5zM85 46h2v1h-2zM89 46h4v1h-4zM95 46h2v1h-2zM100 46h5v1h-5zM108 46h2v1h-2zM112 46h4v1h-4zM118 46h2v1h-2zM123 46h5v1h-5zM79 47h1v1h-1zM85 47h2v1h-2zM89 47h4v1h-4zM95 47h2v1h-2zM98 47h1v1h-1zM102 47h1v1h-1zM106 47h1v1h-1zM108 47h2v1h-2zM112 47h4v1h-4zM118 47h2v1h-2zM125 47h1v1h-1zM79 48h1v1h-1zM85 48h2v1h-2zM89 48h4v1h-4zM95 48h2v1h-2zM99 48h1v1h-1zM101 48h3v1h-3zM105 48h1v1h-1zM108 48h2v1h-2zM112 48h4v1h-4zM118 48h2v1h-2zM125 48h1v1h-1zM75 49h1v1h-1zM78 49h3v1h-3zM83 49h1v1h-1zM85 49h4v1h-4zM93 49h4v1h-4zM100 49h5v1h-5zM108 49h4v1h-4zM116 49h4v1h-4zM121 49h1v1h-1zM124 49h3v1h-3zM129 49h1v1h-1zM76 50h1v1h-1zM79 50h1v1h-1zM82 50h1v1h-1zM85 50h2v1h-2zM88 50h1v1h-1zM93 50h1v1h-1zM95 50h2v1h-2zM98 50h9v1h-9zM108 50h2v1h-2zM111 50h1v1h-1zM116 50h1v1h-1zM118 50h2v1h-2zM122 50h1v1h-1zM125 50h1v1h-1zM128 50h1v1h-1zM75 51h1v1h-1zM77 51h1v1h-1zM79 51h1v1h-1zM81 51h1v1h-1zM83 51h1v1h-1zM85 51h12v1h-12zM100 51h5v1h-5zM108 51h12v1h-12zM121 51h1v1h-1zM123 51h1v1h-1zM125 51h1v1h-1zM127 51h1v1h-1zM129 51h1v1h-1zM76 52h1v1h-1zM78 52h3v1h-3zM82 52h1v1h-1zM85 52h12v1h-12zM99 52h1v1h-1zM101 52h3v1h-3zM105 52h1v1h-1zM108 52h12v1h-12zM122 52h1v1h-1zM124 52h3v1h-3zM128 52h1v1h-1zM75 53h1v1h-1zM79 53h1v1h-1zM83 53h1v1h-1zM85 53h2v1h-2zM95 53h2v1h-2zM98 53h1v1h-1zM102 53h1v1h-1zM106 53h1v1h-1zM108 53h2v1h-2zM118 53h2v1h-2zM121 53h1v1h-1zM125 53h1v1h-1zM129 53h1v1h-1zM78 54h3v1h-3zM85 54h12v1h-12zM101 54h3v1h-3zM108 54h12v1h-12zM124 54h3v1h-3zM75 55h1v1h-1zM79 55h1v1h-1zM84 55h3v1h-3zM88 55h1v1h-1zM90 55h2v1h-2zM93 55h1v1h-1zM95 55h3v1h-3zM102 55h1v1h-1zM107 55h3v1h-3zM111 55h1v1h-1zM113 55h2v1h-2zM116 55h1v1h-1zM118 55h3v1h-3zM125 55h1v1h-1zM129 55h1v1h-1zM76 56h1v1h-1zM79 56h1v1h-1zM82 56h1v1h-1zM84 56h14v1h-14zM102 56h1v1h-1zM107 56h14v1h-14zM122 56h1v1h-1zM125 56h1v1h-1zM128 56h1v1h-1zM74 57h8v1h-8zM84 57h1v1h-1zM88 57h1v1h-1zM93 57h1v1h-1zM97 57h1v1h-1zM99 57h7v1h-7zM107 57h1v1h-1zM111 57h1v1h-1zM116 57h1v1h-1zM120 57h1v1h-1zM123 57h8v1h-8zM76 58h1v1h-1zM78 58h3v1h-3zM84 58h1v1h-1zM88 58h1v1h-1zM93 58h1v1h-1zM97 58h1v1h-1zM99 58h7v1h-7zM107 58h1v1h-1zM111 58h1v1h-1zM116 58h1v1h-1zM120 58h1v1h-1zM124 58h3v1h-3zM128 58h1v1h-1zM75 59h1v1h-1zM79 59h1v1h-1zM83 59h39v1h-39zM125 59h1v1h-1zM129 59h1v1h-1zM79 60h1v1h-1zM82 60h41v1h-41zM125 60h1v1h-1zM79 61h1v1h-1zM82 61h19v1h-19zM102 61h1v1h-1zM104 61h19v1h-19zM125 61h1v1h-1zM74 62h1v1h-1zM79 62h1v1h-1zM82 62h2v1h-2zM86 62h2v1h-2zM90 62h2v1h-2zM94 62h5v1h-5zM101 62h3v1h-3zM106 62h5v1h-5zM113 62h2v1h-2zM117 62h2v1h-2zM121 62h2v1h-2zM125 62h1v1h-1zM130 62h1v1h-1zM75 63h1v1h-1zM77 63h1v1h-1zM79 63h1v1h-1zM82 63h2v1h-2zM86 63h2v1h-2zM90 63h2v1h-2zM94 63h4v1h-4zM100 63h2v1h-2zM103 63h2v1h-2zM107 63h4v1h-4zM113 63h2v1h-2zM117 63h2v1h-2zM121 63h2v1h-2zM125 63h1v1h-1zM127 63h1v1h-1zM129 63h1v1h-1zM76 64h2v1h-2zM79 64h1v1h-1zM82 64h4v1h-4zM88 64h2v1h-2zM92 64h5v1h-5zM99 64h2v1h-2zM102 64h1v1h-1zM104 64h2v1h-2zM108 64h5v1h-5zM115 64h2v1h-2zM119 64h4v1h-4zM125 64h1v1h-1zM127 64h2v1h-2zM75 65h3v1h-3zM79 65h1v1h-1zM82 65h4v1h-4zM88 65h2v1h-2zM92 65h5v1h-5zM100 65h2v1h-2zM103 65h2v1h-2zM108 65h5v1h-5zM115 65h2v1h-2zM119 65h4v1h-4zM125 65h1v1h-1zM127 65h3v1h-3zM78 66h3v1h-3zM82 66h2v1h-2zM86 66h2v1h-2zM90 66h2v1h-2zM94 66h2v1h-2zM98 66h1v1h-1zM101 66h3v1h-3zM106 66h1v1h-1zM109 66h2v1h-2zM113 66h2v1h-2zM117 66h2v1h-2zM121 66h2v1h-2zM124 66h3v1h-3zM79 67h1v1h-1zM82 67h2v1h-2zM86 67h2v1h-2zM90 67h2v1h-2zM94 67h2v1h-2zM97 67h1v1h-1zM99 67h1v1h-1zM102 67h1v1h-1zM105 67h1v1h-1zM107 67h1v1h-1zM109 67h2v1h-2zM113 67h2v1h-2zM117 67h2v1h-2zM121 67h2v1h-2zM125 67h1v1h-1zM78 68h3v1h-3zM82 68h4v1h-4zM88 68h2v1h-2zM92 68h4v1h-4zM98 68h1v1h-1zM101 68h3v1h-3zM106 68h1v1h-1zM109 68h4v1h-4zM115 68h2v1h-2zM119 68h4v1h-4zM124 68h3v1h-3zM75 69h3v1h-3zM79 69h1v1h-1zM82 69h4v1h-4zM88 69h2v1h-2zM92 69h4v1h-4zM98 69h1v1h-1zM100 69h5v1h-5zM106 69h1v1h-1zM109 69h4v1h-4zM115 69h2v1h-2zM119 69h4v1h-4zM125 69h1v1h-1zM127 69h3v1h-3zM76 70h2v1h-2zM79 70h1v1h-1zM82 70h2v1h-2zM86 70h2v1h-2zM90 70h2v1h-2zM94 70h2v1h-2zM97 70h1v1h-1zM99 70h7v1h-7zM107 70h1v1h-1zM109 70h2v1h-2zM113 70h2v1h-2zM117 70h2v1h-2zM121 70h2v1h-2zM125 70h1v1h-1zM127 70h2v1h-2zM75 71h1v1h-1zM77 71h1v1h-1zM79 71h1v1h-1zM82 71h2v1h-2zM86 71h2v1h-2zM90 71h2v1h-2zM94 71h2v1h-2zM97 71h4v1h-4zM102 71h1v1h-1zM104 71h4v1h-4zM109 71h2v1h-2zM113 71h2v1h-2zM117 71h2v1h-2zM121 71h2v1h-2zM125 71h1v1h-1zM127 71h1v1h-1zM129 71h1v1h-1zM74 72h1v1h-1zM79 72h1v1h-1zM82 72h4v1h-4zM88 72h2v1h-2zM92 72h4v1h-4zM97 72h3v1h-3zM101 72h3v1h-3zM105 72h3v1h-3zM109 72h4v1h-4zM115 72h2v1h-2zM119 72h4v1h-4zM125 72h1v1h-1zM130 72h1v1h-1zM79 73h1v1h-1zM82 73h4v1h-4zM88 73h2v1h-2zM92 73h4v1h-4zM97 73h2v1h-2zM100 73h5v1h-5zM106 73h2v1h-2zM109 73h4v1h-4zM115 73h2v1h-2zM119 73h4v1h-4zM125 73h1v1h-1zM76 74h20v1h-20zM98 74h9v1h-9zM109 74h20v1h-20zM74 75h4v1h-4zM79 75h1v1h-1zM81 75h8v1h-8zM90 75h1v1h-1zM92 75h4v1h-4zM97 75h11v1h-11zM109 75h4v1h-4zM114 75h1v1h-1zM116 75h8v1h-8zM125 75h1v1h-1zM127 75h4v1h-4zM74 76h4v1h-4zM79 76h1v1h-1zM81 76h8v1h-8zM90 76h1v1h-1zM92 76h4v1h-4zM97 76h11v1h-11zM109 76h4v1h-4zM114 76h1v1h-1zM116 76h8v1h-8zM125 76h1v1h-1zM127 76h4v1h-4zM74 77h2v1h-2zM78 77h3v1h-3zM83 77h1v1h-1zM86 77h1v1h-1zM89 77h3v1h-3zM94 77h2v1h-2zM100 77h2v1h-2zM103 77h2v1h-2zM109 77h2v1h-2zM113 77h3v1h-3zM118 77h1v1h-1zM121 77h1v1h-1zM124 77h3v1h-3zM129 77h2v1h-2zM74 78h22v1h-22zM100 78h2v1h-2zM103 78h2v1h-2zM109 78h22v1h-22zM74 79h2v1h-2zM78 79h3v1h-3zM83 79h1v1h-1zM86 79h1v1h-1zM89 79h3v1h-3zM94 79h17v1h-17zM113 79h3v1h-3zM118 79h1v1h-1zM121 79h1v1h-1zM124 79h3v1h-3zM129 79h2v1h-2zM74 80h4v1h-4zM79 80h1v1h-1zM81 80h8v1h-8zM90 80h1v1h-1zM92 80h7v1h-7zM106 80h7v1h-7zM114 80h1v1h-1zM116 80h8v1h-8zM125 80h1v1h-1zM127 80h4v1h-4zM74 81h4v1h-4zM79 81h1v1h-1zM81 81h8v1h-8zM90 81h1v1h-1zM92 81h21v1h-21zM114 81h1v1h-1zM116 81h8v1h-8zM125 81h1v1h-1zM127 81h4v1h-4zM74 82h22v1h-22zM109 82h22v1h-22zM74 83h57v1h-57zM74 84h2v1h-2zM77 84h1v1h-1zM79 84h1v1h-1zM81 84h1v1h-1zM83 84h1v1h-1zM85 84h1v1h-1zM87 84h1v1h-1zM89 84h1v1h-1zM91 84h1v1h-1zM93 84h1v1h-1zM95 84h1v1h-1zM97 84h1v1h-1zM99 84h1v1h-1zM101 84h1v1h-1zM103 84h1v1h-1zM105 84h1v1h-1zM107 84h1v1h-1zM109 84h1v1h-1zM111 84h1v1h-1zM113 84h1v1h-1zM115 84h1v1h-1zM117 84h1v1h-1zM119 84h1v1h-1zM121 84h1v1h-1zM123 84h1v1h-1zM125 84h1v1h-1zM127 84h1v1h-1zM129 84h2v1h-2zM74 85h57v1h-57zM0 88h1v1h-1zM2 88h1v1h-1zM4 88h1v1h-1zM6 88h1v1h-1zM8 88h1v1h-1zM10 88h1v1h-1zM12 88h1v1h-1zM14 88h1v1h-1zM16 88h1v1h-1zM18 88h1v1h-1zM20 88h1v1h-1zM22 88h1v1h-1zM24 88h1v1h-1zM26 88h1v1h-1zM28 88h1v1h-1zM30 88h1v1h-1zM32 88h1v1h-1zM34 88h1v1h-1zM36 88h1v1h-1zM38 88h1v1h-1zM40 88h1v1h-1zM42 88h1v1h-1zM44 88h1v1h-1zM46 88h1v1h-1zM48 88h1v1h-1zM50 88h1v1h-1zM52 88h1v1h-1zM54 88h1v1h-1zM56 88h1v1h-1zM58 88h1v1h-1zM60 88h1v1h-1zM62 88h1v1h-1zM64 88h1v1h-1zM66 88h1v1h-1zM68 88h1v1h-1zM70 88h1v1h-1zM72 88h1v1h-1zM74 88h1v1h-1zM76 88h1v1h-1zM78 88h1v1h-1zM80 88h1v1h-1zM82 88h1v1h-1zM84 88h1v1h-1zM86 88h1v1h-1zM88 88h1v1h-1zM90 88h1v1h-1zM92 88h1v1h-1zM94 88h1v1h-1zM96 88h1v1h-1zM98 88h1v1h-1zM100 88h1v1h-1zM102 88h1v1h-1zM104 88h1v1h-1zM106 88h1v1h-1zM108 88h1v1h-1zM110 88h1v1h-1zM112 88h1v1h-1zM114 88h1v1h-1zM116 88h1v1h-1zM118 88h1v1h-1zM120 88h1v1h-1zM122 88h1v1h-1zM124 88h1v1h-1zM126 88h1v1h-1zM128 88h1v1h-1zM130 88h1v1h-1zM132 88h1v1h-1zM134 88h1v1h-1zM136 88h1v1h-1zM138 88h1v1h-1zM140 88h1v1h-1zM142 88h1v1h-1zM144 88h1v1h-1zM146 88h1v1h-1zM0 89h2v1h-2zM3 89h3v1h-3zM7 89h3v1h-3zM11 89h3v1h-3zM15 89h3v1h-3zM19 89h3v1h-3zM23 89h3v1h-3zM27 89h3v1h-3zM31 89h3v1h-3zM35 89h3v1h-3zM39 89h3v1h-3zM43 89h3v1h-3zM47 89h3v1h-3zM51 89h3v1h-3zM55 89h3v1h-3zM59 89h3v1h-3zM63 89h3v1h-3zM67 89h3v1h-3zM71 89h3v1h-3zM75 89h3v1h-3zM79 89h3v1h-3zM83 89h3v1h-3zM87 89h3v1h-3zM91 89h3v1h-3zM95 89h3v1h-3zM99 89h3v1h-3zM103 89h3v1h-3zM107 89h3v1h-3zM111 89h3v1h-3zM115 89h3v1h-3zM119 89h3v1h-3zM123 89h3v1h-3zM127 89h3v1h-3zM131 89h3v1h-3zM135 89h3v1h-3zM139 89h3v1h-3zM143 89h3v1h-3zM147 89h1v1h-1zM0 90h3v1h-3zM4 90h1v1h-1zM6 90h5v1h-5zM12 90h1v1h-1zM14 90h5v1h-5zM20 90h1v1h-1zM22 90h5v1h-5zM28 90h1v1h-1zM30 90h5v1h-5zM36 90h1v1h-1zM38 90h5v1h-5zM44 90h1v1h-1zM46 90h5v1h-5zM52 90h1v1h-1zM54 90h5v1h-5zM60 90h1v1h-1zM62 90h5v1h-5zM68 90h1v1h-1zM70 90h5v1h-5zM76 90h1v1h-1zM78 90h5v1h-5zM84 90h1v1h-1zM86 90h5v1h-5zM92 90h1v1h-1zM94 90h5v1h-5zM100 90h1v1h-1zM102 90h5v1h-5zM108 90h1v1h-1zM110 90h5v1h-5zM116 90h1v1h-1zM118 90h5v1h-5zM124 90h1v1h-1zM126 90h5v1h-5zM132 90h1v1h-1zM134 90h5v1h-5zM140 90h1v1h-1zM142 90h5v1h-5zM0 91h2v1h-2zM3 91h3v1h-3zM7 91h3v1h-3zM11 91h3v1h-3zM15 91h3v1h-3zM19 91h3v1h-3zM23 91h3v1h-3zM27 91h3v1h-3zM31 91h3v1h-3zM35 91h3v1h-3zM39 91h3v1h-3zM43 91h3v1h-3zM47 91h3v1h-3zM51 91h3v1h-3zM55 91h3v1h-3zM59 91h3v1h-3zM63 91h3v1h-3zM67 91h3v1h-3zM71 91h3v1h-3zM75 91h3v1h-3zM79 91h3v1h-3zM83 91h3v1h-3zM87 91h3v1h-3zM91 91h3v1h-3zM95 91h3v1h-3zM99 91h3v1h-3zM103 91h3v1h-3zM107 91h3v1h-3zM111 91h3v1h-3zM115 91h3v1h-3zM119 91h3v1h-3zM123 91h3v1h-3zM127 91h3v1h-3zM131 91h3v1h-3zM135 91h3v1h-3zM139 91h3v1h-3zM143 91h3v1h-3zM147 91h1v1h-1zM0 92h1v1h-1zM2 92h1v1h-1zM4 92h1v1h-1zM6 92h1v1h-1zM8 92h1v1h-1zM10 92h1v1h-1zM12 92h1v1h-1zM14 92h1v1h-1zM16 92h1v1h-1zM18 92h1v1h-1zM20 92h1v1h-1zM22 92h1v1h-1zM24 92h1v1h-1zM26 92h1v1h-1zM28 92h1v1h-1zM30 92h1v1h-1zM32 92h1v1h-1zM34 92h1v1h-1zM36 92h1v1h-1zM38 92h1v1h-1zM40 92h1v1h-1zM42 92h1v1h-1zM44 92h1v1h-1zM46 92h1v1h-1zM48 92h1v1h-1zM50 92h1v1h-1zM52 92h1v1h-1zM54 92h1v1h-1zM56 92h1v1h-1zM58 92h1v1h-1zM60 92h1v1h-1zM62 92h1v1h-1zM64 92h1v1h-1zM66 92h1v1h-1zM68 92h1v1h-1zM70 92h1v1h-1zM72 92h1v1h-1zM74 92h1v1h-1zM76 92h1v1h-1zM78 92h1v1h-1zM80 92h1v1h-1zM82 92h1v1h-1zM84 92h1v1h-1zM86 92h1v1h-1zM88 92h1v1h-1zM90 92h1v1h-1zM92 92h1v1h-1zM94 92h1v1h-1zM96 92h1v1h-1zM98 92h1v1h-1zM100 92h1v1h-1zM102 92h1v1h-1zM104 92h1v1h-1zM106 92h1v1h-1zM108 92h1v1h-1zM110 92h1v1h-1zM112 92h1v1h-1zM114 92h1v1h-1zM116 92h1v1h-1zM118 92h1v1h-1zM120 92h1v1h-1zM122 92h1v1h-1zM124 92h1v1h-1zM126 92h1v1h-1zM128 92h1v1h-1zM130 92h1v1h-1zM132 92h1v1h-1zM134 92h1v1h-1zM136 92h1v1h-1zM138 92h1v1h-1zM140 92h1v1h-1zM142 92h1v1h-1zM144 92h1v1h-1zM146 92h1v1h-1zM0 94h148v1h-148zM1 96h1v1h-1zM3 96h1v1h-1zM5 96h1v1h-1zM7 96h1v1h-1zM9 96h1v1h-1zM11 96h1v1h-1zM13 96h1v1h-1zM15 96h1v1h-1zM17 96h1v1h-1zM19 96h1v1h-1zM21 96h1v1h-1zM23 96h1v1h-1zM25 96h1v1h-1zM27 96h1v1h-1zM29 96h1v1h-1zM31 96h1v1h-1zM33 96h1v1h-1zM35 96h1v1h-1zM37 96h1v1h-1zM39 96h1v1h-1zM41 96h1v1h-1zM43 96h1v1h-1zM45 96h1v1h-1zM47 96h1v1h-1zM49 96h1v1h-1zM51 96h1v1h-1zM53 96h1v1h-1zM55 96h1v1h-1zM57 96h1v1h-1zM59 96h1v1h-1zM61 96h1v1h-1zM63 96h1v1h-1zM65 96h1v1h-1zM67 96h1v1h-1zM69 96h1v1h-1zM71 96h1v1h-1zM73 96h1v1h-1zM75 96h1v1h-1zM77 96h1v1h-1zM79 96h1v1h-1zM81 96h1v1h-1zM83 96h1v1h-1zM85 96h1v1h-1zM87 96h1v1h-1zM89 96h1v1h-1zM91 96h1v1h-1zM93 96h1v1h-1zM95 96h1v1h-1zM97 96h1v1h-1zM99 96h1v1h-1zM101 96h1v1h-1zM103 96h1v1h-1zM105 96h1v1h-1zM107 96h1v1h-1zM109 96h1v1h-1zM111 96h1v1h-1zM113 96h1v1h-1zM115 96h1v1h-1zM117 96h1v1h-1zM119 96h1v1h-1zM121 96h1v1h-1zM123 96h1v1h-1zM125 96h1v1h-1zM127 96h1v1h-1zM129 96h1v1h-1zM131 96h1v1h-1zM133 96h1v1h-1zM135 96h1v1h-1zM137 96h1v1h-1zM139 96h1v1h-1zM141 96h1v1h-1zM143 96h1v1h-1zM145 96h1v1h-1zM147 96h1v1h-1zM2 97h3v1h-3zM6 97h1v1h-1zM8 97h1v1h-1zM10 97h3v1h-3zM16 97h3v1h-3zM20 97h1v1h-1zM22 97h1v1h-1zM24 97h3v1h-3zM30 97h3v1h-3zM34 97h1v1h-1zM36 97h1v1h-1zM38 97h3v1h-3zM44 97h3v1h-3zM48 97h1v1h-1zM50 97h1v1h-1zM52 97h3v1h-3zM58 97h3v1h-3zM62 97h1v1h-1zM64 97h1v1h-1zM66 97h3v1h-3zM72 97h3v1h-3zM76 97h1v1h-1zM78 97h1v1h-1zM80 97h3v1h-3zM86 97h3v1h-3zM90 97h1v1h-1zM92 97h1v1h-1zM94 97h3v1h-3zM100 97h3v1h-3zM104 97h1v1h-1zM106 97h1v1h-1zM108 97h3v1h-3zM114 97h3v1h-3zM118 97h1v1h-1zM120 97h1v1h-1zM122 97h3v1h-3zM128 97h3v1h-3zM132 97h1v1h-1zM134 97h1v1h-1zM136 97h3v1h-3zM142 97h3v1h-3zM146 97h1v1h-1zM1 98h5v1h-5zM7 98h1v1h-1zM9 98h5v1h-5zM15 98h5v1h-5zM21 98h1v1h-1zM23 98h5v1h-5zM29 98h5v1h-5zM35 98h1v1h-1zM37 98h5v1h-5zM43 98h5v1h-5zM49 98h1v1h-1zM51 98h5v1h-5zM57 98h5v1h-5zM63 98h1v1h-1zM65 98h5v1h-5zM71 98h5v1h-5zM77 98h1v1h-1zM79 98h5v1h-5zM85 98h5v1h-5zM91 98h1v1h-1zM93 98h5v1h-5zM99 98h5v1h-5zM105 98h1v1h-1zM107 98h5v1h-5zM113 98h5v1h-5zM119 98h1v1h-1zM121 98h5v1h-5zM127 98h5v1h-5zM133 98h1v1h-1zM135 98h5v1h-5zM141 98h5v1h-5zM147 98h1v1h-1zM2 99h2v1h-2zM6 99h3v1h-3zM11 99h2v1h-2zM16 99h2v1h-2zM20 99h3v1h-3zM25 99h2v1h-2zM30 99h2v1h-2zM34 99h3v1h-3zM39 99h2v1h-2zM44 99h2v1h-2zM48 99h3v1h-3zM53 99h2v1h-2zM58 99h2v1h-2zM62 99h3v1h-3zM67 99h2v1h-2zM72 99h2v1h-2zM76 99h3v1h-3zM81 99h2v1h-2zM86 99h2v1h-2zM90 99h3v1h-3zM95 99h2v1h-2zM100 99h2v1h-2zM104 99h3v1h-3zM109 99h2v1h-2zM114 99h2v1h-2zM118 99h3v1h-3zM123 99h2v1h-2zM128 99h2v1h-2zM132 99h3v1h-3zM137 99h2v1h-2zM142 99h2v1h-2zM146 99h2v1h-2zM0 100h1v1h-1zM6 100h3v1h-3zM14 100h1v1h-1zM20 100h3v1h-3zM28 100h1v1h-1zM34 100h3v1h-3zM42 100h1v1h-1zM48 100h3v1h-3zM56 100h1v1h-1zM62 100h3v1h-3zM70 100h1v1h-1zM76 100h3v1h-3zM84 100h1v1h-1zM90 100h3v1h-3zM98 100h1v1h-1zM104 100h3v1h-3zM112 100h1v1h-1zM118 100h3v1h-3zM126 100h1v1h-1zM132 100h3v1h-3zM140 100h1v1h-1zM146 100h2v1h-2zM1 101h1v1h-1zM5 101h5v1h-5zM13 101h1v1h-1zM15 101h1v1h-1zM19 101h5v1h-5zM27 101h1v1h-1zM29 101h1v1h-1zM33 101h5v1h-5zM41 101h1v1h-1zM43 101h1v1h-1zM47 101h5v1h-5zM55 101h1v1h-1zM57 101h1v1h-1zM61 101h5v1h-5zM69 101h1v1h-1zM71 101h1v1h-1zM75 101h5v1h-5zM83 101h1v1h-1zM85 101h1v1h-1zM89 101h5v1h-5zM97 101h1v1h-1zM99 101h1v1h-1zM103 101h5v1h-5zM111 101h1v1h-1zM113 101h1v1h-1zM117 101h5v1h-5zM125 101h1v1h-1zM127 101h1v1h-1zM131 101h5v1h-5zM139 101h1v1h-1zM141 101h1v1h-1zM145 101h3v1h-3zM0 102h1v1h-1zM6 102h3v1h-3zM14 102h1v1h-1zM20 102h3v1h-3zM28 102h1v1h-1zM34 102h3v1h-3zM42 102h1v1h-1zM48 102h3v1h-3zM56 102h1v1h-1zM62 102h3v1h-3zM70 102h1v1h-1zM76 102h3v1h-3zM84 102h1v1h-1zM90 102h3v1h-3zM98 102h1v1h-1zM104 102h3v1h-3zM112 102h1v1h-1zM118 102h3v1h-3zM126 102h1v1h-1zM132 102h3v1h-3zM140 102h1v1h-1zM146 102h2v1h-2zM0 103h1v1h-1zM2 103h2v1h-2zM5 103h1v1h-1zM7 103h1v1h-1zM9 103h1v1h-1zM11 103h2v1h-2zM14 103h1v1h-1zM16 103h2v1h-2zM19 103h1v1h-1zM21 103h1v1h-1zM23 103h1v1h-1zM25 103h2v1h-2zM28 103h1v1h-1zM30 103h2v1h-2zM33 103h1v1h-1zM35 103h1v1h-1zM37 103h1v1h-1zM39 103h2v1h-2zM42 103h1v1h-1zM44 103h2v1h-2zM47 103h1v1h-1zM49 103h1v1h-1zM51 103h1v1h-1zM53 103h2v1h-2zM56 103h1v1h-1zM58 103h2v1h-2zM61 103h1v1h-1zM63 103h1v1h-1zM65 103h1v1h-1zM67 103h2v1h-2zM70 103h1v1h-1zM72 103h2v1h-2zM75 103h1v1h-1zM77 103h1v1h-1zM79 103h1v1h-1zM81 103h2v1h-2zM84 103h1v1h-1zM86 103h2v1h-2zM89 103h1v1h-1zM91 103h1v1h-1zM93 103h1v1h-1zM95 103h2v1h-2zM98 103h1v1h-1zM100 103h2v1h-2zM103 103h1v1h-1zM105 103h1v1h-1zM107 103h1v1h-1zM109 103h2v1h-2zM112 103h1v1h-1zM114 103h2v1h-2zM117 103h1v1h-1zM119 103h1v1h-1zM121 103h1v1h-1zM123 103h2v1h-2zM126 103h1v1h-1zM128 103h2v1h-2zM131 103h1v1h-1zM133 103h1v1h-1zM135 103h1v1h-1zM137 103h2v1h-2zM140 103h1v1h-1zM142 103h2v1h-2zM145 103h1v1h-1zM147 103h1v1h-1zM0 104h1v1h-1zM2 104h4v1h-4zM7 104h1v1h-1zM9 104h4v1h-4zM14 104h1v1h-1zM16 104h4v1h-4zM21 104h1v1h-1zM23 104h4v1h-4zM28 104h1v1h-1zM30 104h4v1h-4zM35 104h1v1h-1zM37 104h4v1h-4zM42 104h1v1h-1zM44 104h4v1h-4zM49 104h1v1h-1zM51 104h4v1h-4zM56 104h1v1h-1zM58 104h4v1h-4zM63 104h1v1h-1zM65 104h4v1h-4zM70 104h1v1h-1zM72 104h4v1h-4zM77 104h1v1h-1zM79 104h4v1h-4zM84 104h1v1h-1zM86 104h4v1h-4zM91 104h1v1h-1zM93 104h4v1h-4zM98 104h1v1h-1zM100 104h4v1h-4zM105 104h1v1h-1zM107 104h4v1h-4zM112 104h1v1h-1zM114 104h4v1h-4zM119 104h1v1h-1zM121 104h4v1h-4zM126 104h1v1h-1zM128 104h4v1h-4zM133 104h1v1h-1zM135 104h4v1h-4zM140 104h1v1h-1zM142 104h4v1h-4zM147 104h1v1h-1zM0 105h1v1h-1zM3 105h2v1h-2zM7 105h1v1h-1zM10 105h2v1h-2zM14 105h1v1h-1zM17 105h2v1h-2zM21 105h1v1h-1zM24 105h2v1h-2zM28 105h1v1h-1zM31 105h2v1h-2zM35 105h1v1h-1zM38 105h2v1h-2zM42 105h1v1h-1zM45 105h2v1h-2zM49 105h1v1h-1zM52 105h2v1h-2zM56 105h1v1h-1zM59 105h2v1h-2zM63 105h1v1h-1zM66 105h2v1h-2zM70 105h1v1h-1zM73 105h2v1h-2zM77 105h1v1h-1zM80 105h2v1h-2zM84 105h1v1h-1zM87 105h2v1h-2zM91 105h1v1h-1zM94 105h2v1h-2zM98 105h1v1h-1zM101 105h2v1h-2zM105 105h1v1h-1zM108 105h2v1h-2zM112 105h1v1h-1zM115 105h2v1h-2zM119 105h1v1h-1zM122 105h2v1h-2zM126 105h1v1h-1zM129 105h2v1h-2zM133 105h1v1h-1zM136 105h2v1h-2zM140 105h1v1h-1zM143 105h2v1h-2zM147 105h1v1h-1zM0 106h1v1h-1zM2 106h4v1h-4zM7 106h1v1h-1zM9 106h4v1h-4zM14 106h1v1h-1zM16 106h4v1h-4zM21 106h1v1h-1zM23 106h4v1h-4zM28 106h1v1h-1zM30 106h4v1h-4zM35 106h1v1h-1zM37 106h4v1h-4zM42 106h1v1h-1zM44 106h4v1h-4zM49 106h1v1h-1zM51 106h4v1h-4zM56 106h1v1h-1zM58 106h4v1h-4zM63 106h1v1h-1zM65 106h4v1h-4zM70 106h1v1h-1zM72 106h4v1h-4zM77 106h1v1h-1zM79 106h4v1h-4zM84 106h1v1h-1zM86 106h4v1h-4zM91 106h1v1h-1zM93 106h4v1h-4zM98 106h1v1h-1zM100 106h4v1h-4zM105 106h1v1h-1zM107 106h4v1h-4zM112 106h1v1h-1zM114 106h4v1h-4zM119 106h1v1h-1zM121 106h4v1h-4zM126 106h1v1h-1zM128 106h4v1h-4zM133 106h1v1h-1zM135 106h4v1h-4zM140 106h1v1h-1zM142 106h4v1h-4zM147 106h1v1h-1zM0 107h1v1h-1zM2 107h1v1h-1zM4 107h2v1h-2zM7 107h1v1h-1zM9 107h2v1h-2zM12 107h1v1h-1zM14 107h1v1h-1zM16 107h1v1h-1zM18 107h2v1h-2zM21 107h1v1h-1zM23 107h2v1h-2zM26 107h1v1h-1zM28 107h1v1h-1zM30 107h1v1h-1zM32 107h2v1h-2zM35 107h1v1h-1zM37 107h2v1h-2zM40 107h1v1h-1zM42 107h1v1h-1zM44 107h1v1h-1zM46 107h2v1h-2zM49 107h1v1h-1zM51 107h2v1h-2zM54 107h1v1h-1zM56 107h1v1h-1zM58 107h1v1h-1zM60 107h2v1h-2zM63 107h1v1h-1zM65 107h2v1h-2zM68 107h1v1h-1zM70 107h1v1h-1zM72 107h1v1h-1zM74 107h2v1h-2zM77 107h1v1h-1zM79 107h2v1h-2zM82 107h1v1h-1zM84 107h1v1h-1zM86 107h1v1h-1zM88 107h2v1h-2zM91 107h1v1h-1zM93 107h2v1h-2zM96 107h1v1h-1zM98 107h1v1h-1zM100 107h1v1h-1zM102 107h2v1h-2zM105 107h1v1h-1zM107 107h2v1h-2zM110 107h1v1h-1zM112 107h1v1h-1zM114 107h1v1h-1zM116 107h2v1h-2zM119 107h1v1h-1zM121 107h2v1h-2zM124 107h1v1h-1zM126 107h1v1h-1zM128 107h1v1h-1zM130 107h2v1h-2zM133 107h1v1h-1zM135 107h2v1h-2zM138 107h1v1h-1zM140 107h1v1h-1zM142 107h1v1h-1zM144 107h2v1h-2zM147 107h1v1h-1zM0 108h2v1h-2zM7 108h1v1h-1zM13 108h3v1h-3zM21 108h1v1h-1zM27 108h3v1h-3zM35 108h1v1h-1zM41 108h3v1h-3zM49 108h1v1h-1zM55 108h3v1h-3zM63 108h1v1h-1zM69 108h3v1h-3zM77 108h1v1h-1zM83 108h3v1h-3zM91 108h1v1h-1zM97 108h3v1h-3zM105 108h1v1h-1zM111 108h3v1h-3zM119 108h1v1h-1zM125 108h3v1h-3zM133 108h1v1h-1zM139 108h3v1h-3zM147 108h1v1h-1zM0 109h3v1h-3zM6 109h1v1h-1zM8 109h1v1h-1zM12 109h5v1h-5zM20 109h1v1h-1zM22 109h1v1h-1zM26 109h5v1h-5zM34 109h1v1h-1zM36 109h1v1h-1zM40 109h5v1h-5zM48 109h1v1h-1zM50 109h1v1h-1zM54 109h5v1h-5zM62 109h1v1h-1zM64 109h1v1h-1zM68 109h5v1h-5zM76 109h1v1h-1zM78 109h1v1h-1zM82 109h5v1h-5zM90 109h1v1h-1zM92 109h1v1h-1zM96 109h5v1h-5zM104 109h1v1h-1zM106 109h1v1h-1zM110 109h5v1h-5zM118 109h1v1h-1zM120 109h1v1h-1zM124 109h5v1h-5zM132 109h1v1h-1zM134 109h1v1h-1zM138 109h5v1h-5zM146 109h1v1h-1zM0 110h2v1h-2zM7 110h1v1h-1zM13 110h3v1h-3zM21 110h1v1h-1zM27 110h3v1h-3zM35 110h1v1h-1zM41 110h3v1h-3zM49 110h1v1h-1zM55 110h3v1h-3zM63 110h1v1h-1zM69 110h3v1h-3zM77 110h1v1h-1zM83 110h3v1h-3zM91 110h1v1h-1zM97 110h3v1h-3zM105 110h1v1h-1zM111 110h3v1h-3zM119 110h1v1h-1zM125 110h3v1h-3zM133 110h1v1h-1zM139 110h3v1h-3zM147 110h1v1h-1zM0 111h2v1h-2zM4 111h2v1h-2zM9 111h2v1h-2zM13 111h3v1h-3zM18 111h2v1h-2zM23 111h2v1h-2zM27 111h3v1h-3zM32 111h2v1h-2zM37 111h2v1h-2zM41 111h3v1h-3zM46 111h2v1h-2zM51 111h2v1h-2zM55 111h3v1h-3zM60 111h2v1h-2zM65 111h2v1h-2zM69 111h3v1h-3zM74 111h2v1h-2zM79 111h2v1h-2zM83 111h3v1h-3zM88 111h2v1h-2zM93 111h2v1h-2zM97 111h3v1h-3zM102 111h2v1h-2zM107 111h2v1h-2zM111 111h3v1h-3zM116 111h2v1h-2zM121 111h2v1h-2zM125 111h3v1h-3zM130 111h2v1h-2zM135 111h2v1h-2zM139 111h3v1h-3zM144 111h2v1h-2zM0 112h1v1h-1zM2 112h5v1h-5zM8 112h5v1h-5zM14 112h1v1h-1zM16 112h5v1h-5zM22 112h5v1h-5zM28 112h1v1h-1zM30 112h5v1h-5zM36 112h5v1h-5zM42 112h1v1h-1zM44 112h5v1h-5zM50 112h5v1h-5zM56 112h1v1h-1zM58 112h5v1h-5zM64 112h5v1h-5zM70 112h1v1h-1zM72 112h5v1h-5zM78 112h5v1h-5zM84 112h1v1h-1zM86 112h5v1h-5zM92 112h5v1h-5zM98 112h1v1h-1zM100 112h5v1h-5zM106 112h5v1h-5zM112 112h1v1h-1zM114 112h5v1h-5zM120 112h5v1h-5zM126 112h1v1h-1zM128 112h5v1h-5zM134 112h5v1h-5zM140 112h1v1h-1zM142 112h5v1h-5zM1 113h1v1h-1zM3 113h3v1h-3zM9 113h3v1h-3zM13 113h1v1h-1zM15 113h1v1h-1zM17 113h3v1h-3zM23 113h3v1h-3zM27 113h1v1h-1zM29 113h1v1h-1zM31 113h3v1h-3zM37 113h3v1h-3zM41 113h1v1h-1zM43 113h1v1h-1zM45 113h3v1h-3zM51 113h3v1h-3zM55 113h1v1h-1zM57 113h1v1h-1zM59 113h3v1h-3zM65 113h3v1h-3zM69 113h1v1h-1zM71 113h1v1h-1zM73 113h3v1h-3zM79 113h3v1h-3zM83 113h1v1h-1zM85 113h1v1h-1zM87 113h3v1h-3zM93 113h3v1h-3zM97 113h1v1h-1zM99 113h1v1h-1zM101 113h3v1h-3zM107 113h3v1h-3zM111 113h1v1h-1zM113 113h1v1h-1zM115 113h3v1h-3zM121 113h3v1h-3zM125 113h1v1h-1zM127 113h1v1h-1zM129 113h3v1h-3zM135 113h3v1h-3zM139 113h1v1h-1zM141 113h1v1h-1zM143 113h3v1h-3zM0 114h1v1h-1zM2 114h1v1h-1zM4 114h1v1h-1zM6 114h1v1h-1zM8 114h1v1h-1zM10 114h1v1h-1zM12 114h1v1h-1zM14 114h1v1h-1zM16 114h1v1h-1zM18 114h1v1h-1zM20 114h1v1h-1zM22 114h1v1h-1zM24 114h1v1h-1zM26 114h1v1h-1zM28 114h1v1h-1zM30 114h1v1h-1zM32 114h1v1h-1zM34 114h1v1h-1zM36 114h1v1h-1zM38 114h1v1h-1zM40 114h1v1h-1zM42 114h1v1h-1zM44 114h1v1h-1zM46 114h1v1h-1zM48 114h1v1h-1zM50 114h1v1h-1zM52 114h1v1h-1zM54 114h1v1h-1zM56 114h1v1h-1zM58 114h1v1h-1zM60 114h1v1h-1zM62 114h1v1h-1zM64 114h1v1h-1zM66 114h1v1h-1zM68 114h1v1h-1zM70 114h1v1h-1zM72 114h1v1h-1zM74 114h1v1h-1zM76 114h1v1h-1zM78 114h1v1h-1zM80 114h1v1h-1zM82 114h1v1h-1zM84 114h1v1h-1zM86 114h1v1h-1zM88 114h1v1h-1zM90 114h1v1h-1zM92 114h1v1h-1zM94 114h1v1h-1zM96 114h1v1h-1zM98 114h1v1h-1zM100 114h1v1h-1zM102 114h1v1h-1zM104 114h1v1h-1zM106 114h1v1h-1zM108 114h1v1h-1zM110 114h1v1h-1zM112 114h1v1h-1zM114 114h1v1h-1zM116 114h1v1h-1zM118 114h1v1h-1zM120 114h1v1h-1zM122 114h1v1h-1zM124 114h1v1h-1zM126 114h1v1h-1zM128 114h1v1h-1zM130 114h1v1h-1zM132 114h1v1h-1zM134 114h1v1h-1zM136 114h1v1h-1zM138 114h1v1h-1zM140 114h1v1h-1zM142 114h1v1h-1zM144 114h1v1h-1zM146 114h1v1h-1zM0 116h148v1h-148zM0 118h1v1h-1zM2 118h1v1h-1zM4 118h1v1h-1zM6 118h1v1h-1zM8 118h1v1h-1zM10 118h1v1h-1zM12 118h1v1h-1zM14 118h1v1h-1zM16 118h1v1h-1zM18 118h1v1h-1zM20 118h1v1h-1zM22 118h1v1h-1zM24 118h1v1h-1zM26 118h1v1h-1zM28 118h1v1h-1zM30 118h1v1h-1zM32 118h1v1h-1zM34 118h1v1h-1zM36 118h1v1h-1zM38 118h1v1h-1zM40 118h1v1h-1zM42 118h1v1h-1zM44 118h1v1h-1zM46 118h1v1h-1zM48 118h1v1h-1zM50 118h1v1h-1zM52 118h1v1h-1zM54 118h1v1h-1zM56 118h1v1h-1zM58 118h1v1h-1zM60 118h1v1h-1zM62 118h1v1h-1zM64 118h1v1h-1zM66 118h1v1h-1zM68 118h1v1h-1zM70 118h1v1h-1zM72 118h1v1h-1zM74 118h1v1h-1zM76 118h1v1h-1zM78 118h1v1h-1zM80 118h1v1h-1zM82 118h1v1h-1zM84 118h1v1h-1zM86 118h1v1h-1zM88 118h1v1h-1zM90 118h1v1h-1zM92 118h1v1h-1zM94 118h1v1h-1zM96 118h1v1h-1zM98 118h1v1h-1zM100 118h1v1h-1zM102 118h1v1h-1zM104 118h1v1h-1zM106 118h1v1h-1zM108 118h1v1h-1zM110 118h1v1h-1zM112 118h1v1h-1zM114 118h1v1h-1zM116 118h1v1h-1zM118 118h1v1h-1zM120 118h1v1h-1zM122 118h1v1h-1zM124 118h1v1h-1zM126 118h1v1h-1zM128 118h1v1h-1zM130 118h1v1h-1zM132 118h1v1h-1zM134 118h1v1h-1zM136 118h1v1h-1zM138 118h1v1h-1zM140 118h1v1h-1zM142 118h1v1h-1zM144 118h1v1h-1zM146 118h1v1h-1zM0 119h2v1h-2zM3 119h3v1h-3zM7 119h3v1h-3zM11 119h3v1h-3zM15 119h3v1h-3zM19 119h3v1h-3zM23 119h3v1h-3zM27 119h3v1h-3zM31 119h3v1h-3zM35 119h3v1h-3zM39 119h3v1h-3zM43 119h3v1h-3zM47 119h3v1h-3zM51 119h3v1h-3zM55 119h3v1h-3zM59 119h3v1h-3zM63 119h3v1h-3zM67 119h3v1h-3zM71 119h3v1h-3zM75 119h3v1h-3zM79 119h3v1h-3zM83 119h3v1h-3zM87 119h3v1h-3zM91 119h3v1h-3zM95 119h3v1h-3zM99 119h3v1h-3zM103 119h3v1h-3zM107 119h3v1h-3zM111 119h3v1h-3zM115 119h3v1h-3zM119 119h3v1h-3zM123 119h3v1h-3zM127 119h3v1h-3zM131 119h3v1h-3zM135 119h3v1h-3zM139 119h3v1h-3zM143 119h3v1h-3zM147 119h1v1h-1zM0 120h3v1h-3zM4 120h1v1h-1zM6 120h5v1h-5zM12 120h1v1h-1zM14 120h5v1h-5zM20 120h1v1h-1zM22 120h5v1h-5zM28 120h1v1h-1zM30 120h5v1h-5zM36 120h1v1h-1zM38 120h5v1h-5zM44 120h1v1h-1zM46 120h5v1h-5zM52 120h1v1h-1zM54 120h5v1h-5zM60 120h1v1h-1zM62 120h5v1h-5zM68 120h1v1h-1zM70 120h5v1h-5zM76 120h1v1h-1zM78 120h5v1h-5zM84 120h1v1h-1zM86 120h5v1h-5zM92 120h1v1h-1zM94 120h5v1h-5zM100 120h1v1h-1zM102 120h5v1h-5zM108 120h1v1h-1zM110 120h5v1h-5zM116 120h1v1h-1zM118 120h5v1h-5zM124 120h1v1h-1zM126 120h5v1h-5zM132 120h1v1h-1zM134 120h5v1h-5zM140 120h1v1h-1zM142 120h5v1h-5z" fill="url(#g)"/></svg>
<div style="position:absolute;left:711px;top:63px;width:12px;height:542px;background:#e6e4de"></div>
<div style="position:absolute;left:711px;top:63px;width:1px;height:542px;background:#a0a0a0"></div>
<div class="r" style="left:712px;top:63px;width:11px;height:12px;"></div>
<div class="r" style="left:712px;top:75px;width:11px;height:438px;"></div>
<div class="r" style="left:712px;top:592px;width:11px;height:13px;"></div>
<svg style="left:712px;top:63px;" width="11" height="12" viewBox="0 0 11 12"><path d="M2.5 7.5H8.5L5.5 4.5Z" fill="#000"/></svg>
<svg style="left:712px;top:592px;" width="11" height="13" viewBox="0 0 11 13"><path d="M2.5 5H8.5L5.5 8Z" fill="#000"/></svg>
<div style="position:absolute;left:723px;top:50px;width:77px;height:567px;background:#d4d0c8"></div>
<div style="position:absolute;left:725px;top:50px;width:1px;height:567px;background:#a0a0a0"></div>
<div style="position:absolute;left:726px;top:50px;width:1px;height:567px;background:#fff"></div>
<div style="position:absolute;left:727px;top:53px;width:73px;height:135px;background:#a8a8a8;border-left:2px solid #808080;border-top:2px solid #808080"></div>
<div style="position:absolute;left:729.00px;top:54.30px;width:7.6px;height:7.4px;background:#ffffff"></div>
<div style="position:absolute;left:737.93px;top:54.30px;width:7.6px;height:7.4px;background:#e6e6e6"></div>
<div style="position:absolute;left:746.86px;top:54.30px;width:7.6px;height:7.4px;background:#cfcfcf"></div>
<div style="position:absolute;left:755.79px;top:54.30px;width:7.6px;height:7.4px;background:#b8b8b8"></div>
<div style="position:absolute;left:764.72px;top:54.30px;width:7.6px;height:7.4px;background:#a0a0a0"></div>
<div style="position:absolute;left:773.65px;top:54.30px;width:7.6px;height:7.4px;background:#7c7c7c"></div>
<div style="position:absolute;left:782.58px;top:54.30px;width:7.6px;height:7.4px;background:#505050"></div>
<div style="position:absolute;left:791.51px;top:54.30px;width:7.6px;height:7.4px;background:#2a2a2a"></div>
<div style="position:absolute;left:729.00px;top:63.20px;width:7.6px;height:7.4px;background:#e8e8fa"></div>
<div style="position:absolute;left:737.93px;top:63.20px;width:7.6px;height:7.4px;background:#c4c4e4"></div>
<div style="position:absolute;left:746.86px;top:63.20px;width:7.6px;height:7.4px;background:#a4a4d0"></div>
<div style="position:absolute;left:755.79px;top:63.20px;width:7.6px;height:7.4px;background:#8484b4"></div>
<div style="position:absolute;left:764.72px;top:63.20px;width:7.6px;height:7.4px;background:#64649c"></div>
<div style="position:absolute;left:773.65px;top:63.20px;width:7.6px;height:7.4px;background:#484884"></div>
<div style="position:absolute;left:782.58px;top:63.20px;width:7.6px;height:7.4px;background:#303070"></div>
<div style="position:absolute;left:791.51px;top:63.20px;width:7.6px;height:7.4px;background:#181860"></div>
<div style="position:absolute;left:729.00px;top:72.10px;width:7.6px;height:7.4px;background:#fff2e8"></div>
<div style="position:absolute;left:737.93px;top:72.10px;width:7.6px;height:7.4px;background:#e0d2c4"></div>
<div style="position:absolute;left:746.86px;top:72.10px;width:7.6px;height:7.4px;background:#c4b4a4"></div>
<div style="position:absolute;left:755.79px;top:72.10px;width:7.6px;height:7.4px;background:#a49484"></div>
<div style="position:absolute;left:764.72px;top:72.10px;width:7.6px;height:7.4px;background:#887464"></div>
<div style="position:absolute;left:773.65px;top:72.10px;width:7.6px;height:7.4px;background:#705c4c"></div>
<div style="position:absolute;left:782.58px;top:72.10px;width:7.6px;height:7.4px;background:#584434"></div>
<div style="position:absolute;left:791.51px;top:72.10px;width:7.6px;height:7.4px;background:#40302a"></div>
<div style="position:absolute;left:729.00px;top:81.00px;width:7.6px;height:7.4px;background:#ffffd8"></div>
<div style="position:absolute;left:737.93px;top:81.00px;width:7.6px;height:7.4px;background:#ffff90"></div>
<div style="position:absolute;left:746.86px;top:81.00px;width:7.6px;height:7.4px;background:#ffff50"></div>
<div style="position:absolute;left:755.79px;top:81.00px;width:7.6px;height:7.4px;background:#ffff20"></div>
<div style="position:absolute;left:764.72px;top:81.00px;width:7.6px;height:7.4px;background:#ffff00"></div>
<div style="position:absolute;left:773.65px;top:81.00px;width:7.6px;height:7.4px;background:#e0e000"></div>
<div style="position:absolute;left:782.58px;top:81.00px;width:7.6px;height:7.4px;background:#b0b000"></div>
<div style="position:absolute;left:791.51px;top:81.00px;width:7.6px;height:7.4px;background:#808000"></div>
<div style="position:absolute;left:729.00px;top:89.90px;width:7.6px;height:7.4px;background:#ffeae4"></div>
<div style="position:absolute;left:737.93px;top:89.90px;width:7.6px;height:7.4px;background:#ffc498"></div>
<div style="position:absolute;left:746.86px;top:89.90px;width:7.6px;height:7.4px;background:#ffa458"></div>
<div style="position:absolute;left:755.79px;top:89.90px;width:7.6px;height:7.4px;background:#ff8828"></div>
<div style="position:absolute;left:764.72px;top:89.90px;width:7.6px;height:7.4px;background:#ff7400"></div>
<div style="position:absolute;left:773.65px;top:89.90px;width:7.6px;height:7.4px;background:#e06000"></div>
<div style="position:absolute;left:782.58px;top:89.90px;width:7.6px;height:7.4px;background:#b04800"></div>
<div style="position:absolute;left:791.51px;top:89.90px;width:7.6px;height:7.4px;background:#803400"></div>
<div style="position:absolute;left:729.00px;top:98.80px;width:7.6px;height:7.4px;background:#ffe4e4"></div>
<div style="position:absolute;left:737.93px;top:98.80px;width:7.6px;height:7.4px;background:#ff9494"></div>
<div style="position:absolute;left:746.86px;top:98.80px;width:7.6px;height:7.4px;background:#ff5858"></div>
<div style="position:absolute;left:755.79px;top:98.80px;width:7.6px;height:7.4px;background:#ff2828"></div>
<div style="position:absolute;left:764.72px;top:98.80px;width:7.6px;height:7.4px;background:#ff0000"></div>
<div style="position:absolute;left:773.65px;top:98.80px;width:7.6px;height:7.4px;background:#e00000"></div>
<div style="position:absolute;left:782.58px;top:98.80px;width:7.6px;height:7.4px;background:#b00000"></div>
<div style="position:absolute;left:791.51px;top:98.80px;width:7.6px;height:7.4px;background:#800000"></div>
<div style="position:absolute;left:729.00px;top:107.70px;width:7.6px;height:7.4px;background:#fff0e4"></div>
<div style="position:absolute;left:737.93px;top:107.70px;width:7.6px;height:7.4px;background:#ffdc98"></div>
<div style="position:absolute;left:746.86px;top:107.70px;width:7.6px;height:7.4px;background:#ffcc58"></div>
<div style="position:absolute;left:755.79px;top:107.70px;width:7.6px;height:7.4px;background:#ffc028"></div>
<div style="position:absolute;left:764.72px;top:107.70px;width:7.6px;height:7.4px;background:#ffb800"></div>
<div style="position:absolute;left:773.65px;top:107.70px;width:7.6px;height:7.4px;background:#e0a000"></div>
<div style="position:absolute;left:782.58px;top:107.70px;width:7.6px;height:7.4px;background:#b08400"></div>
<div style="position:absolute;left:791.51px;top:107.70px;width:7.6px;height:7.4px;background:#806000"></div>
<div style="position:absolute;left:729.00px;top:116.60px;width:7.6px;height:7.4px;background:#f0ffe4"></div>
<div style="position:absolute;left:737.93px;top:116.60px;width:7.6px;height:7.4px;background:#e4ff98"></div>
<div style="position:absolute;left:746.86px;top:116.60px;width:7.6px;height:7.4px;background:#d0ff58"></div>
<div style="position:absolute;left:755.79px;top:116.60px;width:7.6px;height:7.4px;background:#c0ff28"></div>
<div style="position:absolute;left:764.72px;top:116.60px;width:7.6px;height:7.4px;background:#b8ff00"></div>
<div style="position:absolute;left:773.65px;top:116.60px;width:7.6px;height:7.4px;background:#a0d000"></div>
<div style="position:absolute;left:782.58px;top:116.60px;width:7.6px;height:7.4px;background:#709000"></div>
<div style="position:absolute;left:791.51px;top:116.60px;width:7.6px;height:7.4px;background:#506000"></div>
<div style="position:absolute;left:729.00px;top:125.50px;width:7.6px;height:7.4px;background:#e4ffe4"></div>
<div style="position:absolute;left:737.93px;top:125.50px;width:7.6px;height:7.4px;background:#a4f4a4"></div>
<div style="position:absolute;left:746.86px;top:125.50px;width:7.6px;height:7.4px;background:#64e464"></div>
<div style="position:absolute;left:755.79px;top:125.50px;width:7.6px;height:7.4px;background:#30d430"></div>
<div style="position:absolute;left:764.72px;top:125.50px;width:7.6px;height:7.4px;background:#00d000"></div>
<div style="position:absolute;left:773.65px;top:125.50px;width:7.6px;height:7.4px;background:#00b000"></div>
<div style="position:absolute;left:782.58px;top:125.50px;width:7.6px;height:7.4px;background:#008000"></div>
<div style="position:absolute;left:791.51px;top:125.50px;width:7.6px;height:7.4px;background:#006000"></div>
<div style="position:absolute;left:729.00px;top:134.40px;width:7.6px;height:7.4px;background:#e4fff4"></div>
<div style="position:absolute;left:737.93px;top:134.40px;width:7.6px;height:7.4px;background:#a4ffd8"></div>
<div style="position:absolute;left:746.86px;top:134.40px;width:7.6px;height:7.4px;background:#64f4c4"></div>
<div style="position:absolute;left:755.79px;top:134.40px;width:7.6px;height:7.4px;background:#30e4b0"></div>
<div style="position:absolute;left:764.72px;top:134.40px;width:7.6px;height:7.4px;background:#00e0a0"></div>
<div style="position:absolute;left:773.65px;top:134.40px;width:7.6px;height:7.4px;background:#00c090"></div>
<div style="position:absolute;left:782.58px;top:134.40px;width:7.6px;height:7.4px;background:#009070"></div>
<div style="position:absolute;left:791.51px;top:134.40px;width:7.6px;height:7.4px;background:#006048"></div>
<div style="position:absolute;left:729.00px;top:143.30px;width:7.6px;height:7.4px;background:#e4ffff"></div>
<div style="position:absolute;left:737.93px;top:143.30px;width:7.6px;height:7.4px;background:#a4ffff"></div>
<div style="position:absolute;left:746.86px;top:143.30px;width:7.6px;height:7.4px;background:#64ffff"></div>
<div style="position:absolute;left:755.79px;top:143.30px;width:7.6px;height:7.4px;background:#30f4ff"></div>
<div style="position:absolute;left:764.72px;top:143.30px;width:7.6px;height:7.4px;background:#00e8ff"></div>
<div style="position:absolute;left:773.65px;top:143.30px;width:7.6px;height:7.4px;background:#00c0c8"></div>
<div style="position:absolute;left:782.58px;top:143.30px;width:7.6px;height:7.4px;background:#009098"></div>
<div style="position:absolute;left:791.51px;top:143.30px;width:7.6px;height:7.4px;background:#006068"></div>
<div style="position:absolute;left:729.00px;top:152.20px;width:7.6px;height:7.4px;background:#e4f0ff"></div>
<div style="position:absolute;left:737.93px;top:152.20px;width:7.6px;height:7.4px;background:#c4e0ff"></div>
<div style="position:absolute;left:746.86px;top:152.20px;width:7.6px;height:7.4px;background:#a4d0ff"></div>
<div style="position:absolute;left:755.79px;top:152.20px;width:7.6px;height:7.4px;background:#90c0ff"></div>
<div style="position:absolute;left:764.72px;top:152.20px;width:7.6px;height:7.4px;background:#80b0f0"></div>
<div style="position:absolute;left:773.65px;top:152.20px;width:7.6px;height:7.4px;background:#5080c0"></div>
<div style="position:absolute;left:782.58px;top:152.20px;width:7.6px;height:7.4px;background:#406090"></div>
<div style="position:absolute;left:791.51px;top:152.20px;width:7.6px;height:7.4px;background:#304870"></div>
<div style="position:absolute;left:729.00px;top:161.10px;width:7.6px;height:7.4px;background:#e4e4ff"></div>
<div style="position:absolute;left:737.93px;top:161.10px;width:7.6px;height:7.4px;background:#9898ff"></div>
<div style="position:absolute;left:746.86px;top:161.10px;width:7.6px;height:7.4px;background:#6464f4"></div>
<div style="position:absolute;left:755.79px;top:161.10px;width:7.6px;height:7.4px;background:#3434ff"></div>
<div style="position:absolute;left:764.72px;top:161.10px;width:7.6px;height:7.4px;background:#0000ff"></div>
<div style="position:absolute;left:773.65px;top:161.10px;width:7.6px;height:7.4px;background:#0000d0"></div>
<div style="position:absolute;left:782.58px;top:161.10px;width:7.6px;height:7.4px;background:#0000a0"></div>
<div style="position:absolute;left:791.51px;top:161.10px;width:7.6px;height:7.4px;background:#000070"></div>
<div style="position:absolute;left:729.00px;top:170.00px;width:7.6px;height:7.4px;background:#f0e4ff"></div>
<div style="position:absolute;left:737.93px;top:170.00px;width:7.6px;height:7.4px;background:#e0a4ff"></div>
<div style="position:absolute;left:746.86px;top:170.00px;width:7.6px;height:7.4px;background:#d070ff"></div>
<div style="position:absolute;left:755.79px;top:170.00px;width:7.6px;height:7.4px;background:#c040f4"></div>
<div style="position:absolute;left:764.72px;top:170.00px;width:7.6px;height:7.4px;background:#b800ff"></div>
<div style="position:absolute;left:773.65px;top:170.00px;width:7.6px;height:7.4px;background:#9000d0"></div>
<div style="position:absolute;left:782.58px;top:170.00px;width:7.6px;height:7.4px;background:#7000a0"></div>
<div style="position:absolute;left:791.51px;top:170.00px;width:7.6px;height:7.4px;background:#500080"></div>
<div style="position:absolute;left:729.00px;top:178.90px;width:7.6px;height:7.4px;background:#ffe4ff"></div>
<div style="position:absolute;left:737.93px;top:178.90px;width:7.6px;height:7.4px;background:#ffa4ff"></div>
<div style="position:absolute;left:746.86px;top:178.90px;width:7.6px;height:7.4px;background:#ff64ff"></div>
<div style="position:absolute;left:755.79px;top:178.90px;width:7.6px;height:7.4px;background:#ff30f4"></div>
<div style="position:absolute;left:764.72px;top:178.90px;width:7.6px;height:7.4px;background:#ff00ff"></div>
<div style="position:absolute;left:773.65px;top:178.90px;width:7.6px;height:7.4px;background:#d000d0"></div>
<div style="position:absolute;left:782.58px;top:178.90px;width:7.6px;height:7.4px;background:#a000a0"></div>
<div style="position:absolute;left:791.51px;top:178.90px;width:7.6px;height:7.4px;background:#700070"></div>
<div style="position:absolute;left:726px;top:190px;width:32px;height:63px;background:#fff;border-top:1px solid #808080;border-left:1px solid #808080"></div>
<div style="position:absolute;left:727px;top:191px;width:31px;height:11px;border:1px solid #000"></div>
<div style="position:absolute;left:729px;top:196.5px;width:26px;height:1px;background:#000"></div>
<div style="position:absolute;left:729px;top:206.5px;width:26px;height:2px;background:#000"></div>
<div style="position:absolute;left:729px;top:216.5px;width:26px;height:2.6px;background:#000"></div>
<div style="position:absolute;left:729px;top:226px;width:26px;height:3.4px;background:#000"></div>
<div style="position:absolute;left:729px;top:236px;width:26px;height:4.4px;background:#000"></div>
<div style="position:absolute;left:729px;top:246px;width:26px;height:5.2px;background:#000"></div>
<svg style="left:762px;top:192px;" width="10" height="10" viewBox="0 0 10 10"><path d="M5 1L2 8M5 1L8 8M1 6H9" stroke="#202020" stroke-width="1.2" fill="none"/><circle cx="2" cy="8" r="1.3" fill="#000"/><circle cx="8" cy="8" r="1.3" fill="#000"/></svg>
<div class="t" style="left:771px;top:192.5px;font-size:9.6px;color:#8b1010;font-weight:bold;">2.7</div>
<div class="t" style="left:785px;top:195px;font-size:7.6px;color:#202020;font-weight:normal;">mm</div>
<svg style="left:762px;top:203px;" width="10" height="10" viewBox="0 0 10 10"><path d="M1 2L5 5L1 8M7 1V9M5.5 2.5L7 1L8.5 2.5M5.5 7.5L7 9L8.5 7.5" stroke="#202020" stroke-width="1.1" fill="none"/></svg>
<div class="t" style="left:771px;top:203.5px;font-size:9.6px;color:#8b1010;font-weight:bold;">2.7</div>
<div class="t" style="left:785px;top:206px;font-size:7.6px;color:#202020;font-weight:normal;">mm</div>
<svg style="left:762px;top:215px;" width="10" height="10" viewBox="0 0 10 10"><path d="M1 1L9 9M9 1L1 9M3 1L9 7M1 3L7 9" stroke="#000" stroke-width="1.5"/></svg>
<div class="t" style="left:773px;top:215px;font-size:9.6px;color:#8b1010;font-weight:bold;">4</div>
<svg style="left:788px;top:215px;" width="10" height="10" viewBox="0 0 10 10"><path d="M2 2L8 8M8 2L2 8" stroke="#000" stroke-width="2"/></svg>
<div class="t" style="left:797px;top:215px;font-size:9.6px;color:#8b1010;font-weight:bold;">4</div>
<svg style="left:762px;top:226px;" width="10" height="10" viewBox="0 0 10 10"><path d="M1 2L9 8M1 8L9 2" stroke="#202020" stroke-width="1.2"/></svg>
<div class="t" style="left:773px;top:226px;font-size:9.6px;color:#8b1010;font-weight:bold;">2</div>
<svg style="left:788px;top:226px;" width="10" height="10" viewBox="0 0 10 10"><path d="M2 1L8 9M8 1L2 9" stroke="#202020" stroke-width="1.3"/></svg>
<div class="t" style="left:797px;top:226px;font-size:9.6px;color:#8b1010;font-weight:bold;">2</div>
<svg style="left:762px;top:237px;" width="10" height="10" viewBox="0 0 10 10"><path d="M5 1L9 5L5 9L1 5Z" fill="#000"/><path d="M5 0L10 5L5 10L0 5Z" fill="none" stroke="#777" stroke-width="0.6"/></svg>
<div class="t" style="left:773px;top:237px;font-size:9.6px;color:#8b1010;font-weight:bold;">1</div>
<svg style="left:788px;top:237px;" width="10" height="10" viewBox="0 0 10 10"><rect x="1" y="4" width="6" height="6" fill="none" stroke="#202020" stroke-width="1.1"/><path d="M3 4V1H10V7H7" fill="none" stroke="#202020" stroke-width="1.1"/></svg>
<div class="t" style="left:797px;top:237px;font-size:9.6px;color:#8b1010;font-weight:bold;">2</div>
<svg style="left:762px;top:248px;" width="10" height="10" viewBox="0 0 10 10"><path d="M4 2L7 5L4 8L1 5Z" fill="#000"/><path d="M8.5 1V9M7 2.5L8.5 1L10 2.5M7 7.5L8.5 9L10 7.5" stroke="#000" stroke-width="1.2" fill="none"/></svg>
<div class="t" style="left:771px;top:248px;font-size:9.6px;color:#8b1010;font-weight:bold;">100</div>
<div class="t" style="left:789px;top:249px;font-size:7.6px;color:#303030;font-weight:normal;">%</div>
<div class="r" style="left:726px;top:255px;width:33px;height:30px;"></div>
<svg style="left:726px;top:255px;" width="33" height="30" viewBox="0 0 33 30"><rect x="8" y="6" width="17" height="15" fill="#f0f0f0" stroke="#404040" stroke-width="1"/><rect x="8" y="6" width="17" height="2.5" fill="#1a2a9a"/><path d="M10 17L16 12L22 18L16 24Z" fill="#d0d0d0" stroke="#000" stroke-width="1.2"/><path d="M21 17Q24 19 23 24L28 25" stroke="#000" stroke-width="2" fill="none"/></svg>
<div class="s" style="left:762px;top:261px;width:10px;height:10px;background:#fff;border-right-color:#d4d0c8;border-bottom-color:#d4d0c8;box-shadow:inset 1px 1px 0 #404040"></div>
<div class="s" style="left:774px;top:261px;width:10px;height:10px;background:#fff;border-right-color:#d4d0c8;border-bottom-color:#d4d0c8;box-shadow:inset 1px 1px 0 #404040"></div>
<div class="s" style="left:786px;top:261px;width:10px;height:10px;background:#fff;border-right-color:#d4d0c8;border-bottom-color:#d4d0c8;box-shadow:inset 1px 1px 0 #404040"></div>
<div class="s" style="left:798px;top:261px;width:10px;height:10px;background:#fff;border-right-color:#d4d0c8;border-bottom-color:#d4d0c8;box-shadow:inset 1px 1px 0 #404040"></div>
<svg style="left:762px;top:261px;" width="10" height="10" viewBox="0 0 10 10"><path d="M2.5 5L4.5 7L8 2.5" stroke="#000" stroke-width="1.5" fill="none"/></svg>
<svg style="left:762px;top:272px;" width="10" height="10" viewBox="0 0 10 10"><path d="M3 1L7 9M7 1L3 9" stroke="#303030" stroke-width="1.1"/></svg>
<svg style="left:774px;top:272px;" width="10" height="10" viewBox="0 0 10 10"><path d="M1 1L9 9M9 1L1 9" stroke="#303030" stroke-width="1.1"/><circle cx="2" cy="2" r="1.2" fill="none" stroke="#303030"/><circle cx="8" cy="2" r="1.2" fill="none" stroke="#303030"/></svg>
<svg style="left:786px;top:272px;" width="10" height="10" viewBox="0 0 10 10"><rect x="1" y="1" width="8" height="8" fill="#a0a0a0" stroke="#303030" stroke-width="1"/></svg>
<svg style="left:798px;top:272px;" width="10" height="10" viewBox="0 0 10 10"><rect x="1" y="1" width="5" height="8" fill="none" stroke="#303030" stroke-width="1"/></svg>
<div style="position:absolute;left:726px;top:284px;width:74px;height:1px;background:#fff"></div>
<div style="position:absolute;left:727px;top:287px;width:7px;height:9px;background:#0000ff"></div>
<div style="position:absolute;left:726px;top:306px;width:74px;height:1px;background:#a0a0a0"></div>
<div style="position:absolute;left:726px;top:307px;width:74px;height:1px;background:#fff"></div>
<div style="position:absolute;left:726px;top:327px;width:74px;height:1px;background:#fff"></div>
<div class="s" style="left:728.0px;top:330.5px;width:13px;height:13px;background:#fff;border-right-color:#d4d0c8;border-bottom-color:#d4d0c8;box-shadow:inset 1px 1px 0 #404040"></div>
<svg style="left:728.0px;top:330.5px;" width="13" height="13" viewBox="0 0 13 13"><path d="M3 3L9 9M9 3L3 9" stroke="#c0c0c0" stroke-width="1.6"/><path d="M3 3L9 9" stroke="#000" stroke-width="2" stroke-linecap="round"/><path d="M9 3L3 9" stroke="#000" stroke-width="2" stroke-linecap="round"/></svg>
<div class="rb" style="left:743.6px;top:330.5px;width:13px;height:13px"></div>
<svg style="left:743.6px;top:330.5px;" width="13" height="13" viewBox="0 0 13 13"><path d="M6 2.5V9.5M2.5 6H9.5" stroke="#c4c4c4" stroke-width="1.4"/><path d="M6 2.5L6 9.5" stroke="#000" stroke-width="1.8" stroke-linecap="round"/><path d="M2.5 6L9.5 6" stroke="#000" stroke-width="1.8" stroke-linecap="round"/></svg>
<div class="rb" style="left:759.2px;top:330.5px;width:13px;height:13px"></div>
<svg style="left:759.2px;top:330.5px;" width="13" height="13" viewBox="0 0 13 13"><path d="M3 3L9 9M9 3L3 9" stroke="#c0c0c0" stroke-width="1.6"/><path d="M2.1999999999999997 2.1999999999999997L6.4 6.4M6.4 2.1999999999999997L2.1999999999999997 6.4" stroke="#000" stroke-width="1.4"/><path d="M6.6 2.1999999999999997L10.799999999999999 6.4M10.799999999999999 2.1999999999999997L6.6 6.4" stroke="#000" stroke-width="1.4"/><path d="M6.6 6.6L10.799999999999999 10.799999999999999M10.799999999999999 6.6L6.6 10.799999999999999" stroke="#000" stroke-width="1.4"/><path d="M2.1999999999999997 6.6L6.4 10.799999999999999M6.4 6.6L2.1999999999999997 10.799999999999999" stroke="#000" stroke-width="1.4"/></svg>
<div class="rb" style="left:774.8px;top:330.5px;width:13px;height:13px"></div>
<svg style="left:774.8px;top:330.5px;" width="13" height="13" viewBox="0 0 13 13"><path d="M2.5 2.5L6.5 10M6.5 2.5L2.5 10" stroke="#000" stroke-width="1.5"/><path d="M6 2.5L10 10M10 2.5L6 10" stroke="#000" stroke-width="1.5"/></svg>
<div class="rb" style="left:728.0px;top:343.8px;width:13px;height:13px"></div>
<svg style="left:728.0px;top:343.8px;" width="13" height="13" viewBox="0 0 13 13"><path d="M3 3L9 9M9 3L3 9" stroke="#c0c0c0" stroke-width="1.6"/><path d="M9 3L3 9" stroke="#000" stroke-width="2" stroke-linecap="round"/><path d="M3 3L6 6" stroke="#000" stroke-width="2" stroke-linecap="round"/></svg>
<div class="rb" style="left:743.6px;top:343.8px;width:13px;height:13px"></div>
<svg style="left:743.6px;top:343.8px;" width="13" height="13" viewBox="0 0 13 13"><path d="M6 2.5V9.5M2.5 6H9.5" stroke="#c4c4c4" stroke-width="1.4"/><path d="M2.5 6L9.5 6" stroke="#000" stroke-width="1.8" stroke-linecap="round"/><path d="M6 2.5L6 6" stroke="#000" stroke-width="1.8" stroke-linecap="round"/></svg>
<div class="rb" style="left:759.2px;top:343.8px;width:13px;height:13px"></div>
<svg style="left:759.2px;top:343.8px;" width="13" height="13" viewBox="0 0 13 13"><path d="M3 3L9 9M9 3L3 9" stroke="#c0c0c0" stroke-width="1.6"/><path d="M2.1999999999999997 2.1999999999999997L6.4 6.4M6.4 2.1999999999999997L2.1999999999999997 6.4" stroke="#000" stroke-width="1.4"/><path d="M6.6 2.1999999999999997L10.799999999999999 6.4M10.799999999999999 2.1999999999999997L6.6 6.4" stroke="#000" stroke-width="1.4"/><path d="M2.1999999999999997 6.6L6.4 10.799999999999999M6.4 6.6L2.1999999999999997 10.799999999999999" stroke="#000" stroke-width="1.4"/></svg>
<div class="rb" style="left:774.8px;top:343.8px;width:13px;height:13px"></div>
<svg style="left:774.8px;top:343.8px;" width="13" height="13" viewBox="0 0 13 13"><path d="M2.5 2.5L6.5 6.5M6.5 2.5L2.5 6.5" stroke="#000" stroke-width="1.5"/><path d="M6 2.5L10 6.5M10 2.5L6 6.5" stroke="#000" stroke-width="1.5"/></svg>
<div class="rb" style="left:728.0px;top:357.1px;width:13px;height:13px"></div>
<svg style="left:728.0px;top:357.1px;" width="13" height="13" viewBox="0 0 13 13"><path d="M3 3L9 9M9 3L3 9" stroke="#c0c0c0" stroke-width="1.6"/><path d="M3 3L9 9" stroke="#000" stroke-width="2" stroke-linecap="round"/><path d="M3 9L6 6" stroke="#000" stroke-width="2" stroke-linecap="round"/></svg>
<div class="rb" style="left:743.6px;top:357.1px;width:13px;height:13px"></div>
<svg style="left:743.6px;top:357.1px;" width="13" height="13" viewBox="0 0 13 13"><path d="M6 2.5V9.5M2.5 6H9.5" stroke="#c4c4c4" stroke-width="1.4"/><path d="M6 2.5L6 9.5" stroke="#000" stroke-width="1.8" stroke-linecap="round"/><path d="M6 6L9.5 6" stroke="#000" stroke-width="1.8" stroke-linecap="round"/></svg>
<div class="rb" style="left:759.2px;top:357.1px;width:13px;height:13px"></div>
<svg style="left:759.2px;top:357.1px;" width="13" height="13" viewBox="0 0 13 13"><path d="M3 3L9 9M9 3L3 9" stroke="#c0c0c0" stroke-width="1.6"/><path d="M2.1999999999999997 2.1999999999999997L6.4 6.4M6.4 2.1999999999999997L2.1999999999999997 6.4" stroke="#000" stroke-width="1.4"/><path d="M6.6 6.6L10.799999999999999 10.799999999999999M10.799999999999999 6.6L6.6 10.799999999999999" stroke="#000" stroke-width="1.4"/><path d="M2.1999999999999997 6.6L6.4 10.799999999999999M6.4 6.6L2.1999999999999997 10.799999999999999" stroke="#000" stroke-width="1.4"/></svg>
<div class="rb" style="left:774.8px;top:357.1px;width:13px;height:13px"></div>
<svg style="left:774.8px;top:357.1px;" width="13" height="13" viewBox="0 0 13 13"><path d="M2.5 6L6.5 10M6.5 6L2.5 10" stroke="#000" stroke-width="1.5"/><path d="M6 6L10 10M10 6L6 10" stroke="#000" stroke-width="1.5"/></svg>
<div class="rb" style="left:728.0px;top:370.3px;width:13px;height:13px"></div>
<svg style="left:728.0px;top:370.3px;" width="13" height="13" viewBox="0 0 13 13"><path d="M3 3L9 9M9 3L3 9" stroke="#c0c0c0" stroke-width="1.6"/><path d="M9 3L3 9" stroke="#000" stroke-width="2" stroke-linecap="round"/><path d="M6 6L9 9" stroke="#000" stroke-width="2" stroke-linecap="round"/></svg>
<div class="rb" style="left:743.6px;top:370.3px;width:13px;height:13px"></div>
<svg style="left:743.6px;top:370.3px;" width="13" height="13" viewBox="0 0 13 13"><path d="M6 2.5V9.5M2.5 6H9.5" stroke="#c4c4c4" stroke-width="1.4"/><path d="M2.5 6L9.5 6" stroke="#000" stroke-width="1.8" stroke-linecap="round"/><path d="M6 6L6 9.5" stroke="#000" stroke-width="1.8" stroke-linecap="round"/></svg>
<div class="rb" style="left:759.2px;top:370.3px;width:13px;height:13px"></div>
<svg style="left:759.2px;top:370.3px;" width="13" height="13" viewBox="0 0 13 13"><path d="M3 3L9 9M9 3L3 9" stroke="#c0c0c0" stroke-width="1.6"/><path d="M6.6 2.1999999999999997L10.799999999999999 6.4M10.799999999999999 2.1999999999999997L6.6 6.4" stroke="#000" stroke-width="1.4"/><path d="M6.6 6.6L10.799999999999999 10.799999999999999M10.799999999999999 6.6L6.6 10.799999999999999" stroke="#000" stroke-width="1.4"/><path d="M2.1999999999999997 6.6L6.4 10.799999999999999M6.4 6.6L2.1999999999999997 10.799999999999999" stroke="#000" stroke-width="1.4"/></svg>
<div class="rb" style="left:774.8px;top:370.3px;width:13px;height:13px"></div>
<svg style="left:774.8px;top:370.3px;" width="13" height="13" viewBox="0 0 13 13"><path d="M2.5 2.5L6.5 10M6.5 2.5L2.5 10" stroke="#000" stroke-width="1.5"/><path d="M6 2.5L10 10M10 2.5L6 10" stroke="#000" stroke-width="1.5"/></svg>
<div class="rb" style="left:728.0px;top:383.6px;width:13px;height:13px"></div>
<svg style="left:728.0px;top:383.6px;" width="13" height="13" viewBox="0 0 13 13"><path d="M3 3L9 9M9 3L3 9" stroke="#c0c0c0" stroke-width="1.6"/><path d="M3 3L9 9" stroke="#000" stroke-width="2" stroke-linecap="round"/><path d="M9 3L6 6" stroke="#000" stroke-width="2" stroke-linecap="round"/></svg>
<div class="rb" style="left:743.6px;top:383.6px;width:13px;height:13px"></div>
<svg style="left:743.6px;top:383.6px;" width="13" height="13" viewBox="0 0 13 13"><path d="M6 2.5V9.5M2.5 6H9.5" stroke="#c4c4c4" stroke-width="1.4"/><path d="M6 2.5L6 9.5" stroke="#000" stroke-width="1.8" stroke-linecap="round"/><path d="M2.5 6L6 6" stroke="#000" stroke-width="1.8" stroke-linecap="round"/></svg>
<div class="rb" style="left:759.2px;top:383.6px;width:13px;height:13px"></div>
<svg style="left:759.2px;top:383.6px;" width="13" height="13" viewBox="0 0 13 13"><path d="M3 3L9 9M9 3L3 9" stroke="#c0c0c0" stroke-width="1.6"/><path d="M2.1999999999999997 2.1999999999999997L6.4 6.4M6.4 2.1999999999999997L2.1999999999999997 6.4" stroke="#000" stroke-width="1.4"/><path d="M6.6 2.1999999999999997L10.799999999999999 6.4M10.799999999999999 2.1999999999999997L6.6 6.4" stroke="#000" stroke-width="1.4"/><path d="M6.6 6.6L10.799999999999999 10.799999999999999M10.799999999999999 6.6L6.6 10.799999999999999" stroke="#000" stroke-width="1.4"/></svg>
<div class="rb" style="left:774.8px;top:383.6px;width:13px;height:13px"></div>
<svg style="left:774.8px;top:383.6px;" width="13" height="13" viewBox="0 0 13 13"><path d="M6 2.5L10 10M10 2.5L6 10" stroke="#000" stroke-width="1.5"/></svg>
<div class="rb" style="left:728.0px;top:396.9px;width:13px;height:13px"></div>
<svg style="left:728.0px;top:396.9px;" width="13" height="13" viewBox="0 0 13 13"><path d="M3 3L9 9M9 3L3 9" stroke="#c0c0c0" stroke-width="1.6"/><path d="M3 3L9 9" stroke="#000" stroke-width="2" stroke-linecap="round"/></svg>
<div class="rb" style="left:743.6px;top:396.9px;width:13px;height:13px"></div>
<svg style="left:743.6px;top:396.9px;" width="13" height="13" viewBox="0 0 13 13"><path d="M6 2.5V9.5M2.5 6H9.5" stroke="#c4c4c4" stroke-width="1.4"/><path d="M6 2.5L6 9.5" stroke="#000" stroke-width="1.8" stroke-linecap="round"/></svg>
<div class="rb" style="left:759.2px;top:396.9px;width:13px;height:13px"></div>
<svg style="left:759.2px;top:396.9px;" width="13" height="13" viewBox="0 0 13 13"><path d="M3 3L9 9M9 3L3 9" stroke="#c0c0c0" stroke-width="1.6"/><path d="M2.1999999999999997 2.1999999999999997L6.4 6.4M6.4 2.1999999999999997L2.1999999999999997 6.4" stroke="#000" stroke-width="1.4"/><path d="M6.6 6.6L10.799999999999999 10.799999999999999M10.799999999999999 6.6L6.6 10.799999999999999" stroke="#000" stroke-width="1.4"/></svg>
<div class="rb" style="left:774.8px;top:396.9px;width:13px;height:13px"></div>
<svg style="left:774.8px;top:396.9px;" width="13" height="13" viewBox="0 0 13 13"><path d="M2.5 2.5L6.5 10M6.5 2.5L2.5 10" stroke="#000" stroke-width="1.5"/></svg>
<div class="rb" style="left:728.0px;top:410.2px;width:13px;height:13px"></div>
<svg style="left:728.0px;top:410.2px;" width="13" height="13" viewBox="0 0 13 13"><path d="M3 3L9 9M9 3L3 9" stroke="#c0c0c0" stroke-width="1.6"/><path d="M9 3L3 9" stroke="#000" stroke-width="2" stroke-linecap="round"/></svg>
<div class="rb" style="left:743.6px;top:410.2px;width:13px;height:13px"></div>
<svg style="left:743.6px;top:410.2px;" width="13" height="13" viewBox="0 0 13 13"><path d="M6 2.5V9.5M2.5 6H9.5" stroke="#c4c4c4" stroke-width="1.4"/><path d="M2.5 6L9.5 6" stroke="#000" stroke-width="1.8" stroke-linecap="round"/></svg>
<div class="rb" style="left:759.2px;top:410.2px;width:13px;height:13px"></div>
<svg style="left:759.2px;top:410.2px;" width="13" height="13" viewBox="0 0 13 13"><path d="M3 3L9 9M9 3L3 9" stroke="#c0c0c0" stroke-width="1.6"/><path d="M6.6 2.1999999999999997L10.799999999999999 6.4M10.799999999999999 2.1999999999999997L6.6 6.4" stroke="#000" stroke-width="1.4"/><path d="M2.1999999999999997 6.6L6.4 10.799999999999999M6.4 6.6L2.1999999999999997 10.799999999999999" stroke="#000" stroke-width="1.4"/></svg>
<div class="rb" style="left:774.8px;top:410.2px;width:13px;height:13px"></div>
<svg style="left:774.8px;top:410.2px;" width="13" height="13" viewBox="0 0 13 13"><path d="M3 3L10 10M10 3L3 10M6.5 2V11M2 6.5H11" stroke="#000" stroke-width="1.6"/><circle cx="6.5" cy="6.5" r="1.8" fill="#000"/></svg>
<div class="rb" style="left:728.0px;top:423.5px;width:13px;height:13px"></div>
<svg style="left:728.0px;top:423.5px;" width="13" height="13" viewBox="0 0 13 13"><path d="M3 3L9 9M9 3L3 9" stroke="#c0c0c0" stroke-width="1.6"/><path d="M3 3L6 6" stroke="#000" stroke-width="2" stroke-linecap="round"/><path d="M9 3L6 6" stroke="#000" stroke-width="2" stroke-linecap="round"/></svg>
<div class="rb" style="left:743.6px;top:423.5px;width:13px;height:13px"></div>
<svg style="left:743.6px;top:423.5px;" width="13" height="13" viewBox="0 0 13 13"><path d="M6 2.5V9.5M2.5 6H9.5" stroke="#c4c4c4" stroke-width="1.4"/><path d="M6 2.5L6 6" stroke="#000" stroke-width="1.8" stroke-linecap="round"/><path d="M6 6L9.5 6" stroke="#000" stroke-width="1.8" stroke-linecap="round"/></svg>
<div class="rb" style="left:759.2px;top:423.5px;width:13px;height:13px"></div>
<svg style="left:759.2px;top:423.5px;" width="13" height="13" viewBox="0 0 13 13"><path d="M3 3L9 9M9 3L3 9" stroke="#c0c0c0" stroke-width="1.6"/><path d="M2.1999999999999997 2.1999999999999997L6.4 6.4M6.4 2.1999999999999997L2.1999999999999997 6.4" stroke="#000" stroke-width="1.4"/><path d="M6.6 2.1999999999999997L10.799999999999999 6.4M10.799999999999999 2.1999999999999997L6.6 6.4" stroke="#000" stroke-width="1.4"/></svg>
<div class="rb" style="left:774.8px;top:423.5px;width:13px;height:13px"></div>
<svg style="left:774.8px;top:423.5px;" width="13" height="13" viewBox="0 0 13 13"><path d="M3 3L10 10M10 3L3 10M6.5 2V11M2 6.5H11" stroke="#000" stroke-width="1.6"/><circle cx="6.5" cy="6.5" r="1.8" fill="#000"/></svg>
<div class="rb" style="left:728.0px;top:436.7px;width:13px;height:13px"></div>
<svg style="left:728.0px;top:436.7px;" width="13" height="13" viewBox="0 0 13 13"><path d="M3 3L9 9M9 3L3 9" stroke="#c0c0c0" stroke-width="1.6"/><path d="M9 3L6 6" stroke="#000" stroke-width="2" stroke-linecap="round"/><path d="M9 9L6 6" stroke="#000" stroke-width="2" stroke-linecap="round"/></svg>
<div class="rb" style="left:743.6px;top:436.7px;width:13px;height:13px"></div>
<svg style="left:743.6px;top:436.7px;" width="13" height="13" viewBox="0 0 13 13"><path d="M6 2.5V9.5M2.5 6H9.5" stroke="#c4c4c4" stroke-width="1.4"/><path d="M6 6L9.5 6" stroke="#000" stroke-width="1.8" stroke-linecap="round"/><path d="M6 6L6 9.5" stroke="#000" stroke-width="1.8" stroke-linecap="round"/></svg>
<div class="rb" style="left:759.2px;top:436.7px;width:13px;height:13px"></div>
<svg style="left:759.2px;top:436.7px;" width="13" height="13" viewBox="0 0 13 13"><path d="M3 3L9 9M9 3L3 9" stroke="#c0c0c0" stroke-width="1.6"/><path d="M6.6 2.1999999999999997L10.799999999999999 6.4M10.799999999999999 2.1999999999999997L6.6 6.4" stroke="#000" stroke-width="1.4"/><path d="M6.6 6.6L10.799999999999999 10.799999999999999M10.799999999999999 6.6L6.6 10.799999999999999" stroke="#000" stroke-width="1.4"/></svg>
<div class="rb" style="left:774.8px;top:436.7px;width:13px;height:13px"></div>
<svg style="left:774.8px;top:436.7px;" width="13" height="13" viewBox="0 0 13 13"><path d="M3 3L10 10M10 3L3 10M6.5 2V11M2 6.5H11" stroke="#000" stroke-width="1.6"/><circle cx="6.5" cy="6.5" r="1.8" fill="#000"/></svg>
<div class="rb" style="left:728.0px;top:450.0px;width:13px;height:13px"></div>
<svg style="left:728.0px;top:450.0px;" width="13" height="13" viewBox="0 0 13 13"><path d="M3 3L9 9M9 3L3 9" stroke="#c0c0c0" stroke-width="1.6"/><path d="M3 9L6 6" stroke="#000" stroke-width="2" stroke-linecap="round"/><path d="M9 9L6 6" stroke="#000" stroke-width="2" stroke-linecap="round"/></svg>
<div class="rb" style="left:743.6px;top:450.0px;width:13px;height:13px"></div>
<svg style="left:743.6px;top:450.0px;" width="13" height="13" viewBox="0 0 13 13"><path d="M6 2.5V9.5M2.5 6H9.5" stroke="#c4c4c4" stroke-width="1.4"/><path d="M2.5 6L6 6" stroke="#000" stroke-width="1.8" stroke-linecap="round"/><path d="M6 6L6 9.5" stroke="#000" stroke-width="1.8" stroke-linecap="round"/></svg>
<div class="rb" style="left:759.2px;top:450.0px;width:13px;height:13px"></div>
<svg style="left:759.2px;top:450.0px;" width="13" height="13" viewBox="0 0 13 13"><path d="M3 3L9 9M9 3L3 9" stroke="#c0c0c0" stroke-width="1.6"/><path d="M6.6 6.6L10.799999999999999 10.799999999999999M10.799999999999999 6.6L6.6 10.799999999999999" stroke="#000" stroke-width="1.4"/><path d="M2.1999999999999997 6.6L6.4 10.799999999999999M6.4 6.6L2.1999999999999997 10.799999999999999" stroke="#000" stroke-width="1.4"/></svg>
<div class="rb" style="left:774.8px;top:450.0px;width:13px;height:13px"></div>
<svg style="left:774.8px;top:450.0px;" width="13" height="13" viewBox="0 0 13 13"><path d="M3 3L10 10M10 3L3 10M6.5 2V11M2 6.5H11" stroke="#000" stroke-width="1.6"/><circle cx="6.5" cy="6.5" r="1.8" fill="#000"/></svg>
<div class="rb" style="left:728.0px;top:463.3px;width:13px;height:13px"></div>
<svg style="left:728.0px;top:463.3px;" width="13" height="13" viewBox="0 0 13 13"><path d="M3 3L9 9M9 3L3 9" stroke="#c0c0c0" stroke-width="1.6"/><path d="M3 3L6 6" stroke="#000" stroke-width="2" stroke-linecap="round"/><path d="M3 9L6 6" stroke="#000" stroke-width="2" stroke-linecap="round"/></svg>
<div class="rb" style="left:743.6px;top:463.3px;width:13px;height:13px"></div>
<svg style="left:743.6px;top:463.3px;" width="13" height="13" viewBox="0 0 13 13"><path d="M6 2.5V9.5M2.5 6H9.5" stroke="#c4c4c4" stroke-width="1.4"/><path d="M2.5 6L6 6" stroke="#000" stroke-width="1.8" stroke-linecap="round"/><path d="M6 2.5L6 6" stroke="#000" stroke-width="1.8" stroke-linecap="round"/></svg>
<div class="rb" style="left:759.2px;top:463.3px;width:13px;height:13px"></div>
<svg style="left:759.2px;top:463.3px;" width="13" height="13" viewBox="0 0 13 13"><path d="M3 3L9 9M9 3L3 9" stroke="#c0c0c0" stroke-width="1.6"/><path d="M2.1999999999999997 2.1999999999999997L6.4 6.4M6.4 2.1999999999999997L2.1999999999999997 6.4" stroke="#000" stroke-width="1.4"/><path d="M2.1999999999999997 6.6L6.4 10.799999999999999M6.4 6.6L2.1999999999999997 10.799999999999999" stroke="#000" stroke-width="1.4"/></svg>
<div class="rb" style="left:774.8px;top:463.3px;width:13px;height:13px"></div>
<svg style="left:774.8px;top:463.3px;" width="13" height="13" viewBox="0 0 13 13"><path d="M3 3L10 10M10 3L3 10M6.5 2V11M2 6.5H11" stroke="#000" stroke-width="1.6"/><circle cx="6.5" cy="6.5" r="1.8" fill="#000"/></svg>
<div class="rb" style="left:728.0px;top:476.6px;width:13px;height:13px"></div>
<svg style="left:728.0px;top:476.6px;" width="13" height="13" viewBox="0 0 13 13"><path d="M3 3L9 9M9 3L3 9" stroke="#c0c0c0" stroke-width="1.6"/><path d="M3 3L6 6" stroke="#000" stroke-width="2" stroke-linecap="round"/></svg>
<div class="rb" style="left:743.6px;top:476.6px;width:13px;height:13px"></div>
<svg style="left:743.6px;top:476.6px;" width="13" height="13" viewBox="0 0 13 13"><path d="M6 2.5V9.5M2.5 6H9.5" stroke="#c4c4c4" stroke-width="1.4"/><path d="M6 2.5L6 6" stroke="#000" stroke-width="1.8" stroke-linecap="round"/></svg>
<div class="rb" style="left:759.2px;top:476.6px;width:13px;height:13px"></div>
<svg style="left:759.2px;top:476.6px;" width="13" height="13" viewBox="0 0 13 13"><path d="M3 3L9 9M9 3L3 9" stroke="#c0c0c0" stroke-width="1.6"/><path d="M2.1999999999999997 2.1999999999999997L6.4 6.4M6.4 2.1999999999999997L2.1999999999999997 6.4" stroke="#000" stroke-width="1.4"/></svg>
<div class="rb" style="left:774.8px;top:476.6px;width:13px;height:13px"></div>
<svg style="left:774.8px;top:476.6px;" width="13" height="13" viewBox="0 0 13 13"><path d="M3 3L10 10M10 3L3 10" stroke="#000" stroke-width="1.2"/><path d="M4 2.5L9 10.5" stroke="#000" stroke-width="2" stroke-linecap="round"/></svg>
<div class="rb" style="left:728.0px;top:489.9px;width:13px;height:13px"></div>
<svg style="left:728.0px;top:489.9px;" width="13" height="13" viewBox="0 0 13 13"><path d="M3 3L9 9M9 3L3 9" stroke="#c0c0c0" stroke-width="1.6"/><path d="M9 3L6 6" stroke="#000" stroke-width="2" stroke-linecap="round"/></svg>
<div class="rb" style="left:743.6px;top:489.9px;width:13px;height:13px"></div>
<svg style="left:743.6px;top:489.9px;" width="13" height="13" viewBox="0 0 13 13"><path d="M6 2.5V9.5M2.5 6H9.5" stroke="#c4c4c4" stroke-width="1.4"/><path d="M6 6L9.5 6" stroke="#000" stroke-width="1.8" stroke-linecap="round"/></svg>
<div class="rb" style="left:759.2px;top:489.9px;width:13px;height:13px"></div>
<svg style="left:759.2px;top:489.9px;" width="13" height="13" viewBox="0 0 13 13"><path d="M3 3L9 9M9 3L3 9" stroke="#c0c0c0" stroke-width="1.6"/><path d="M6.6 2.1999999999999997L10.799999999999999 6.4M10.799999999999999 2.1999999999999997L6.6 6.4" stroke="#000" stroke-width="1.4"/></svg>
<div class="rb" style="left:774.8px;top:489.9px;width:13px;height:13px"></div>
<svg style="left:774.8px;top:489.9px;" width="13" height="13" viewBox="0 0 13 13"><path d="M3 3L10 10M10 3L3 10" stroke="#000" stroke-width="1.2"/><path d="M4 2.5L9 10.5" stroke="#000" stroke-width="2" stroke-linecap="round"/></svg>
<div class="rb" style="left:728.0px;top:503.1px;width:13px;height:13px"></div>
<svg style="left:728.0px;top:503.1px;" width="13" height="13" viewBox="0 0 13 13"><path d="M3 3L9 9M9 3L3 9" stroke="#c0c0c0" stroke-width="1.6"/><path d="M6 6L9 9" stroke="#000" stroke-width="2" stroke-linecap="round"/></svg>
<div class="rb" style="left:743.6px;top:503.1px;width:13px;height:13px"></div>
<svg style="left:743.6px;top:503.1px;" width="13" height="13" viewBox="0 0 13 13"><path d="M6 2.5V9.5M2.5 6H9.5" stroke="#c4c4c4" stroke-width="1.4"/><path d="M6 6L6 9.5" stroke="#000" stroke-width="1.8" stroke-linecap="round"/></svg>
<div class="rb" style="left:759.2px;top:503.1px;width:13px;height:13px"></div>
<svg style="left:759.2px;top:503.1px;" width="13" height="13" viewBox="0 0 13 13"><path d="M3 3L9 9M9 3L3 9" stroke="#c0c0c0" stroke-width="1.6"/><path d="M6.6 6.6L10.799999999999999 10.799999999999999M10.799999999999999 6.6L6.6 10.799999999999999" stroke="#000" stroke-width="1.4"/></svg>
<div class="rb" style="left:774.8px;top:503.1px;width:13px;height:13px"></div>
<svg style="left:774.8px;top:503.1px;" width="13" height="13" viewBox="0 0 13 13"><path d="M3 3L10 10M10 3L3 10" stroke="#000" stroke-width="1.2"/><path d="M4 2.5L9 10.5" stroke="#000" stroke-width="2" stroke-linecap="round"/></svg>
<div class="rb" style="left:728.0px;top:516.4px;width:13px;height:13px"></div>
<svg style="left:728.0px;top:516.4px;" width="13" height="13" viewBox="0 0 13 13"><path d="M3 3L9 9M9 3L3 9" stroke="#c0c0c0" stroke-width="1.6"/><path d="M6 6L3 9" stroke="#000" stroke-width="2" stroke-linecap="round"/></svg>
<div class="rb" style="left:743.6px;top:516.4px;width:13px;height:13px"></div>
<svg style="left:743.6px;top:516.4px;" width="13" height="13" viewBox="0 0 13 13"><path d="M6 2.5V9.5M2.5 6H9.5" stroke="#c4c4c4" stroke-width="1.4"/><path d="M2.5 6L6 6" stroke="#000" stroke-width="1.8" stroke-linecap="round"/></svg>
<div class="rb" style="left:759.2px;top:516.4px;width:13px;height:13px"></div>
<svg style="left:759.2px;top:516.4px;" width="13" height="13" viewBox="0 0 13 13"><path d="M3 3L9 9M9 3L3 9" stroke="#c0c0c0" stroke-width="1.6"/><path d="M2.1999999999999997 6.6L6.4 10.799999999999999M6.4 6.6L2.1999999999999997 10.799999999999999" stroke="#000" stroke-width="1.4"/></svg>
<div class="rb" style="left:774.8px;top:516.4px;width:13px;height:13px"></div>
<svg style="left:774.8px;top:516.4px;" width="13" height="13" viewBox="0 0 13 13"><path d="M3 3L10 10M10 3L3 10" stroke="#000" stroke-width="1.2"/><path d="M4 2.5L9 10.5" stroke="#000" stroke-width="2" stroke-linecap="round"/></svg>
<div style="position:absolute;left:727px;top:530px;width:62px;height:61px;background:#d4d0c8;border-right:2px solid #606060;border-bottom:2px solid #606060;border-top:1px solid #e8e6e2;border-left:1px solid #e8e6e2"></div>
<svg style="left:735px;top:537px" width="47" height="47"><defs><pattern id="br" patternUnits="userSpaceOnUse" width="5" height="6"><rect width="5" height="6" fill="#e4e2dc"/><path d="M0 0.5H5M0 3.5H5M1 0.5V3.5M3.5 3.5V6.5" stroke="#7a7a7a" stroke-width="0.9"/></pattern></defs><rect width="47" height="47" fill="url(#br)"/></svg>
<div style="position:absolute;left:789px;top:530px;width:11px;height:14px;border-bottom:2px solid #606060;border-top:1px solid #fff"></div>
<div class="t" style="left:792px;top:534px;font-size:8px;color:#555;font-weight:normal;">...</div>
<div style="position:absolute;left:791px;top:549px;width:10px;height:1px;background:#808080"></div>
<div style="position:absolute;left:791px;top:549px;width:1px;height:10px;background:#808080"></div>
<svg style="left:790px;top:561px;" width="10" height="9" viewBox="0 0 10 9"><circle cx="4" cy="3" r="2.4" fill="#e00000"/><circle cx="7" cy="3" r="2.4" fill="#00a000"/><circle cx="5.5" cy="6" r="2.4" fill="#f0e000"/><circle cx="4.5" cy="4.5" r="1.6" fill="#0000d0"/></svg>
<div style="position:absolute;left:791px;top:573px;width:10px;height:1px;background:#808080"></div>
<div style="position:absolute;left:791px;top:573px;width:1px;height:10px;background:#808080"></div>
<svg style="left:790px;top:585px;" width="8" height="8" viewBox="0 0 8 8"><rect x="1" y="1" width="6" height="6" fill="#fff" stroke="#404040"/></svg>
<svg style="left:728px;top:593px;" width="9" height="9" viewBox="0 0 9 9"><circle cx="4.5" cy="4.5" r="4" fill="#fff" stroke="#707070" stroke-width="1"/><circle cx="4.5" cy="4.5" r="1.6" fill="#000"/></svg>
<svg style="left:728px;top:603px;" width="9" height="9" viewBox="0 0 9 9"><circle cx="4.5" cy="4.5" r="4" fill="#fff" stroke="#909090" stroke-width="1"/></svg>
<div class="t" style="left:741px;top:593.5px;font-size:7.9px;color:#1a1a1a;font-weight:normal;letter-spacing:-0.35px">Combine</div>
<div class="t" style="left:741px;top:603.5px;font-size:7.9px;color:#1a1a1a;font-weight:normal;letter-spacing:-0.35px">Replace</div>
<div style="position:absolute;left:38px;top:604px;width:673px;height:13px;background:#d4d0c8"></div>
<div style="position:absolute;left:38px;top:604px;width:158px;height:2px;background:#404040"></div>
<div style="position:absolute;left:196px;top:616px;width:515px;height:1px;background:#909090"></div>
<div style="position:absolute;left:196px;top:617px;width:515px;height:1px;background:#fff"></div>
<svg style="left:38px;top:604px;" width="40" height="14" viewBox="0 0 40 14"><path d="M22 1.5L25.5 12H28L31 1.5Z" fill="#fff"/><path d="M5 1.5L8.5 12H11L13 1.5L16.5 12H19L21 1.5L24.5 12H27L29 1.5L32.5 12H35L37 1.5" fill="none" stroke="#303030" stroke-width="1.2"/></svg>
<div style="position:absolute;left:0px;top:617px;width:800px;height:1px;background:#a0a0a0"></div>
<div style="position:absolute;left:0px;top:618px;width:800px;height:11px;background:#d4d0c8"></div>
<div class="s" style="left:0px;top:618px;width:317px;height:11px;"></div>
<div class="s" style="left:318px;top:618px;width:38px;height:11px;"></div>
<div class="s" style="left:357px;top:618px;width:133px;height:11px;"></div>
<div class="s" style="left:491px;top:618px;width:57px;height:11px;"></div>
<div class="s" style="left:549px;top:618px;width:251px;height:11px;"></div>
<div style="position:absolute;left:322px;top:620px;width:33px;height:8px;background:#fff;border:1px solid #303030;border-right-color:#a0a0a0;border-bottom-color:#a0a0a0"></div>
<div class="t" style="left:359px;top:620.5px;font-size:9.2px;color:#1a1a1a;font-weight:normal;">X:71, Y:158, Z:50%</div>
<div class="t" style="left:494.5px;top:620.5px;font-size:9.2px;color:#1a1a1a;font-weight:normal;">4833</div>
<div class="t" style="left:552px;top:620.5px;font-size:9.2px;color:#1a1a1a;font-weight:normal;">148 x 121 (399.6 x 326.7 mm), Цвета: 1</div>
<div style="position:absolute;left:0px;top:629px;width:800px;height:21px;background:#d4d0c8"></div>
<div style="position:absolute;left:0px;top:629px;width:800px;height:1px;background:#fff"></div>
<div class="r" style="left:1px;top:632px;width:40px;height:17px;"></div>
<svg style="left:4px;top:634px;" width="14" height="13" viewBox="0 0 14 13"><path d="M1 2Q4 0 6.5 2L5.5 6Q3 4 0 6Z" fill="#f04020"/><path d="M7.5 2Q10 4 13 2L12 6Q9 8 6.5 6Z" fill="#30b030"/><path d="M0 7Q3 5 5.5 7L4.5 11Q2 9 -1 11Z" fill="#2070e0"/><path d="M6.5 7Q9 9 12 7L11 11Q8 13 5.5 11Z" fill="#f0c000"/></svg>
<div class="t" style="left:17px;top:636px;font-size:9px;color:#000;font-weight:bold;">Пуск</div>
<div style="position:absolute;left:45px;top:633px;width:1px;height:15px;background:#808080"></div>
<div style="position:absolute;left:46px;top:633px;width:1px;height:15px;background:#fff"></div>
<div class="r" style="left:51px;top:632px;width:18px;height:17px;"></div>
<div class="r" style="left:100px;top:632px;width:22px;height:17px;"></div>
<div class="r" style="left:173px;top:632px;width:20px;height:17px;"></div>
<div class="r" style="left:196px;top:632px;width:23px;height:17px;"></div>
<div class="r" style="left:221px;top:632px;width:22px;height:17px;"></div>
<div class="r" style="left:245px;top:632px;width:22px;height:17px;"></div>
<div class="r" style="left:269px;top:632px;width:22px;height:17px;"></div>
<div class="s" style="left:148px;top:632px;width:22px;height:17px;background:#f4f3f0;box-shadow:inset 1px 1px 0 #404040"></div>
<div style="position:absolute;left:70px;top:633px;width:1px;height:15px;background:#808080"></div>
<div style="position:absolute;left:71px;top:633px;width:1px;height:15px;background:#fff"></div>
<div style="position:absolute;left:73px;top:633px;width:1px;height:15px;background:#808080"></div>
<div style="position:absolute;left:74px;top:633px;width:1px;height:15px;background:#fff"></div>
<svg style="left:53px;top:634px;" width="14" height="13" viewBox="0 0 14 13"><rect x="1" y="2" width="12" height="10" fill="#f0e070" stroke="#c0a040" stroke-width="0.8"/><rect x="2" y="7" width="10" height="5" fill="#60b0e0"/><rect x="3" y="1" width="3" height="2" fill="#e0c060"/><circle cx="4" cy="4" r="1" fill="#40c040"/></svg>
<svg style="left:80px;top:634px;" width="14" height="13" viewBox="0 0 14 13"><rect x="1" y="1" width="12" height="12" rx="1" fill="#2040c0"/><rect x="3" y="1" width="7" height="4" fill="#fff"/><rect x="2.5" y="7" width="9" height="5" fill="#f0a0b0"/><path d="M3 9H11" stroke="#fff" stroke-width="0.8"/></svg>
<svg style="left:103px;top:634px;" width="16" height="13" viewBox="0 0 16 13"><rect x="4" y="3" width="11" height="10" fill="#fff"/><path d="M2 1Q9 3 12 12Q6 9 2 1Z" fill="#2060d0"/><path d="M8 7Q11 9 12 12" stroke="#20a040" stroke-width="1.5" fill="none"/></svg>
<svg style="left:128px;top:634px;" width="15" height="14" viewBox="0 0 15 14"><rect x="0" y="0" width="15" height="14" fill="#fff"/><path d="M4 2L7.5 4.5L4 7L0.5 4.5ZM11 2L14.5 4.5L11 7L7.5 4.5ZM4 7L7.5 9.5L11 7L14.5 9.5L11 12L7.5 9.5L4 12L0.5 9.5Z" fill="#1a80e0" transform="translate(0,0.5) scale(1)"/></svg>
<svg style="left:151px;top:634px;" width="16" height="13" viewBox="0 0 16 13"><path d="M2 2L9 9M12 1L8 6" stroke="#4060a0" stroke-width="1.8"/><path d="M7 7L11 12" stroke="#202020" stroke-width="2.2"/><circle cx="4" cy="3" r="1.2" fill="#80c040"/></svg>
<svg style="left:175px;top:633px;" width="16" height="15" viewBox="0 0 16 15"><circle cx="8" cy="7.5" r="6.5" fill="#e03020"/><path d="M8 7.5L2.4 4.3A6.5 6.5 0 0 0 5 13.3Z" fill="#30a040"/><path d="M8 7.5L5 13.3A6.5 6.5 0 0 0 14.5 7.5Z" fill="#f0c020"/><circle cx="8" cy="7.5" r="3" fill="#fff"/><circle cx="8" cy="7.5" r="2.2" fill="#3070e0"/></svg>
<svg style="left:199px;top:634px;" width="17" height="14" viewBox="0 0 17 14"><path d="M4 4H13V9H6V12H4Z" fill="#404040"/><rect x="5" y="1" width="2" height="3" fill="#c04040"/><circle cx="4" cy="11" r="3" fill="#e00000"/><path d="M2 12H15" stroke="#808080" stroke-width="1"/></svg>
<svg style="left:224px;top:634px;" width="16" height="13" viewBox="0 0 16 13"><rect x="1" y="1" width="14" height="12" fill="#60c060"/><rect x="2" y="2" width="12" height="10" fill="#e8f8e8"/><path d="M4 3L11 11M11 3L4 11" stroke="#108010" stroke-width="2"/></svg>
<svg style="left:249px;top:634px;" width="14" height="14" viewBox="0 0 14 14"><rect x="2" y="1" width="10" height="12" fill="#c8e0f8" stroke="#80a0c0" stroke-width="0.8"/><path d="M4 4H10M4 6H10M4 8H10" stroke="#6080b0" stroke-width="0.7"/></svg>
<svg style="left:272px;top:633px;" width="17" height="15" viewBox="0 0 17 15"><ellipse cx="7" cy="9" rx="6" ry="4.5" fill="#e0e8f0" stroke="#a0b0c0" stroke-width="0.8"/><circle cx="4.5" cy="9" r="1" fill="#e03030"/><circle cx="7" cy="11" r="1" fill="#3060e0"/><circle cx="9" cy="8" r="1" fill="#30a030"/><path d="M9 11L15 1" stroke="#f0a020" stroke-width="2"/></svg>
<div style="position:absolute;left:580px;top:633px;width:1px;height:15px;background:#808080"></div>
<div style="position:absolute;left:581px;top:633px;width:1px;height:15px;background:#fff"></div>
<div class="t" style="left:587.5px;top:636px;font-size:9px;color:#000;font-weight:normal;">EN</div>
<div style="position:absolute;left:603px;top:633px;width:1px;height:15px;background:#808080"></div>
<div style="position:absolute;left:604px;top:633px;width:1px;height:15px;background:#fff"></div>
<div class="s" style="left:606px;top:632px;width:196px;height:18px;"></div>
<svg style="left:611px;top:633px;" width="14" height="14" viewBox="0 0 14 14"><rect x="0" y="0" width="14" height="14" rx="1" fill="#d01010"/><path d="M3 11Q5 3 8 3Q10 3 9 7Q8 10 11 11" stroke="#fff" stroke-width="1.5" fill="none"/></svg>
<svg style="left:630px;top:632px;" width="15" height="16" viewBox="0 0 15 16"><circle cx="5" cy="10" r="4" fill="#f8c800"/><circle cx="10" cy="6" r="4" fill="#f0d020"/><circle cx="6" cy="4" r="3" fill="#ffe040"/></svg>
<svg style="left:650px;top:634px;" width="12" height="12" viewBox="0 0 12 12"><path d="M1 6H11M3 3L9 9M9 3L3 9" stroke="#a0a0a0" stroke-width="0.8"/><circle cx="6" cy="7" r="3" fill="#e02020"/></svg>
<svg style="left:667px;top:633px;" width="15" height="15" viewBox="0 0 15 15"><rect x="1" y="4" width="10" height="9" rx="2" fill="#b0b8c8"/><rect x="3" y="5" width="6" height="6" fill="#e0e8f0"/><path d="M10 2Q14 4 13 9" stroke="#2060e0" stroke-width="2" fill="none"/></svg>
<svg style="left:687px;top:633px;" width="14" height="15" viewBox="0 0 14 15"><circle cx="4" cy="4" r="3" fill="#e8e8f0" stroke="#8090a0" stroke-width="0.6"/><circle cx="10" cy="4" r="3" fill="#e8e8f0" stroke="#8090a0" stroke-width="0.6"/><circle cx="4" cy="10" r="3" fill="#e8e8f0" stroke="#8090a0" stroke-width="0.6"/><circle cx="10" cy="11" r="3.2" fill="#2080e0"/></svg>
<svg style="left:707px;top:633px;" width="13" height="15" viewBox="0 0 13 15"><path d="M2 1V14" stroke="#909090" stroke-width="1.5"/><path d="M3 2H10L8 5L11 8H3Z" fill="#f0f0f0" stroke="#909090" stroke-width="0.7"/></svg>
<svg style="left:725px;top:633px;" width="14" height="15" viewBox="0 0 14 15"><rect x="1" y="1" width="3" height="6" fill="#e0e0e0" stroke="#909090" stroke-width="0.6"/><rect x="5" y="4" width="8" height="7" fill="#c0c0c0" stroke="#707070" stroke-width="0.7"/><path d="M2.5 7V14M6 13H12" stroke="#909090" stroke-width="1"/></svg>
<svg style="left:744px;top:633px;" width="14" height="15" viewBox="0 0 14 15"><path d="M2 5H5L9 2V13L5 10H2Z" fill="#e8e8e8" stroke="#909090" stroke-width="0.8"/><path d="M11 4Q13 7.5 11 11" stroke="#a0a0a0" stroke-width="1" fill="none"/></svg>
<div class="t" style="left:768.5px;top:636px;font-size:9.3px;color:#000;font-weight:normal;">17:35</div>
<div style="position:absolute;left:797px;top:633px;width:3px;height:14px;background:#3060d0"></div>
</body></html>
